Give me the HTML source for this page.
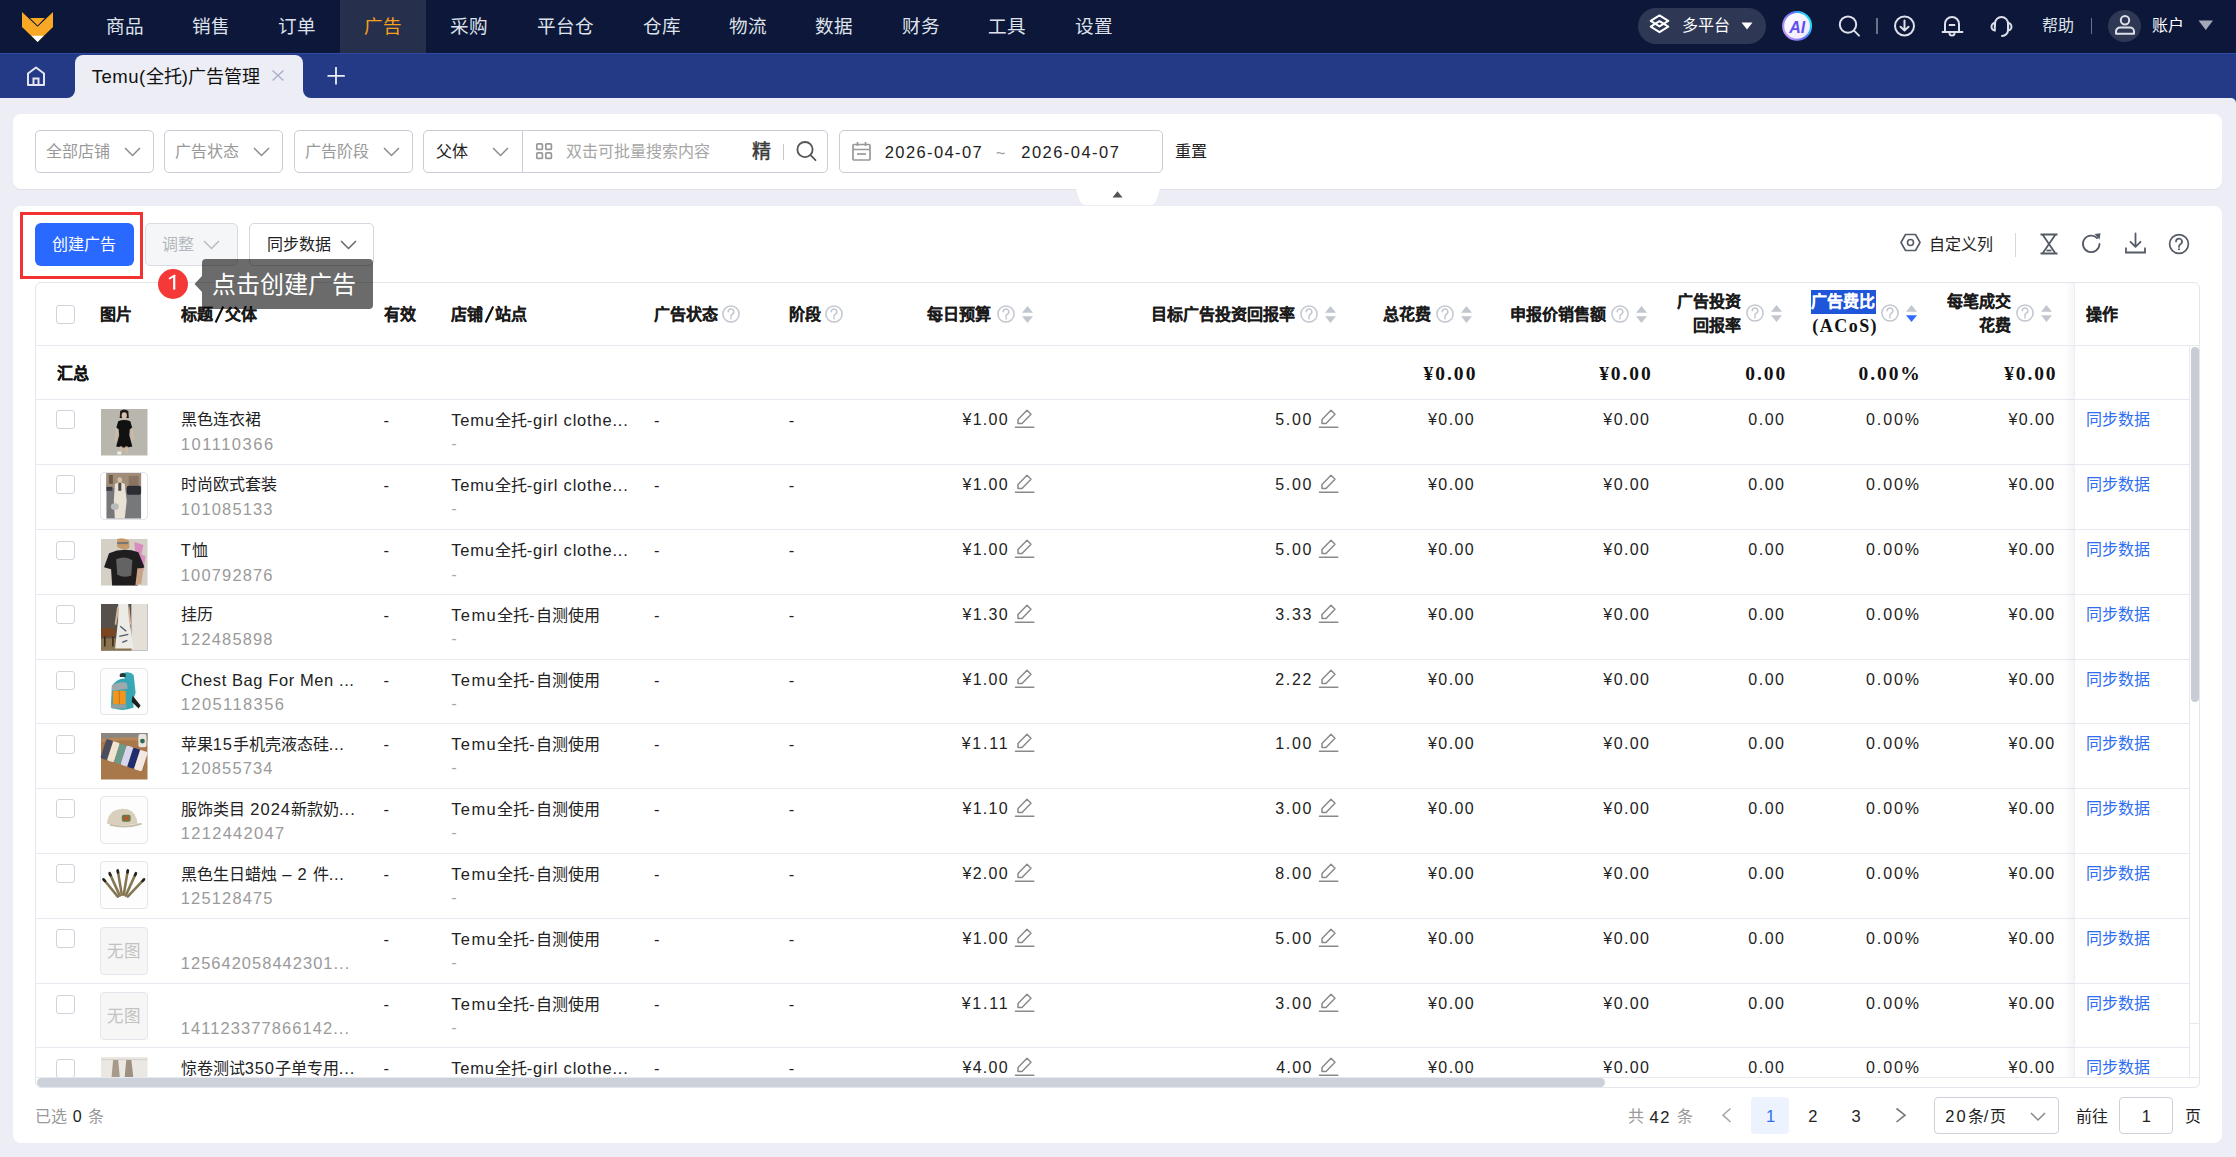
<!DOCTYPE html>
<html lang="zh-CN"><head><meta charset="utf-8"><title>Temu(全托)广告管理</title>
<style>
html,body{margin:0;padding:0;width:2236px;height:1157px;overflow:hidden;background:#ecedf5;font-family:"Liberation Sans",sans-serif}
.a{position:absolute;white-space:nowrap;box-sizing:border-box}
.b{-webkit-text-stroke:0.25px currentColor}
svg.a{overflow:visible}
</style></head><body>
<div class="a" style="left:0.0px;top:0.0px;width:2236.0px;height:53.0px;background:#0c1739"></div>
<div class="a" style="left:340.0px;top:0.0px;width:86.0px;height:53.0px;background:#262f4c"></div>
<svg class="a" style="left:20.0px;top:10.0px" width="36" height="34" viewBox="0 0 36 34" fill="none"><polygon points="2,2 17.6,16.7 33,2 33,17 17.6,32 2,17" fill="#f9a825"/><polygon points="10,8 24.8,8 17.6,15.4" fill="#f9a825"/><polygon points="11.5,25.8 23.7,25.8 17.6,32" fill="#ffffff"/></svg>
<div class="a" style="left:105.5px;top:15.1px;height:24px;line-height:24px;color:#dfe2ea;font-size:18.6px;font-weight:normal;">商品</div>
<div class="a" style="left:191.8px;top:15.1px;height:24px;line-height:24px;color:#dfe2ea;font-size:18.6px;font-weight:normal;">销售</div>
<div class="a" style="left:277.8px;top:15.1px;height:24px;line-height:24px;color:#dfe2ea;font-size:18.6px;font-weight:normal;">订单</div>
<div class="a" style="left:363.8px;top:15.1px;height:24px;line-height:24px;color:#f7a21b;font-size:18.6px;font-weight:normal;">广告</div>
<div class="a" style="left:449.8px;top:15.1px;height:24px;line-height:24px;color:#dfe2ea;font-size:18.6px;font-weight:normal;">采购</div>
<div class="a" style="left:536.8px;top:15.1px;height:24px;line-height:24px;color:#dfe2ea;font-size:18.6px;font-weight:normal;">平台仓</div>
<div class="a" style="left:642.6px;top:15.1px;height:24px;line-height:24px;color:#dfe2ea;font-size:18.6px;font-weight:normal;">仓库</div>
<div class="a" style="left:728.8px;top:15.1px;height:24px;line-height:24px;color:#dfe2ea;font-size:18.6px;font-weight:normal;">物流</div>
<div class="a" style="left:815.4px;top:15.1px;height:24px;line-height:24px;color:#dfe2ea;font-size:18.6px;font-weight:normal;">数据</div>
<div class="a" style="left:901.5px;top:15.1px;height:24px;line-height:24px;color:#dfe2ea;font-size:18.6px;font-weight:normal;">财务</div>
<div class="a" style="left:987.8px;top:15.1px;height:24px;line-height:24px;color:#dfe2ea;font-size:18.6px;font-weight:normal;">工具</div>
<div class="a" style="left:1074.5px;top:15.1px;height:24px;line-height:24px;color:#dfe2ea;font-size:18.6px;font-weight:normal;">设置</div>
<div class="a" style="left:1638.0px;top:8.0px;width:128.0px;height:36.0px;background:#2e3754;border-radius:18px"></div>
<svg class="a" style="left:1648.0px;top:13.0px" width="24" height="23" viewBox="0 0 24 23" fill="none"><path d="M11.5 2.4 L20.3 7.9 L11.5 13.4 L2.7 7.9 Z" stroke="#fff" stroke-width="2" stroke-linejoin="round"/><path d="M11.5 8.2 L20.3 13.7 L11.5 19.2 L2.7 13.7 Z" stroke="#fff" stroke-width="2" stroke-linejoin="round"/></svg>
<div class="a" style="left:1681.8px;top:14.3px;height:24px;line-height:24px;color:#fff;font-size:16px;font-weight:normal;">多平台</div>
<svg class="a" style="left:1741.0px;top:22.0px" width="12" height="8" viewBox="0 0 12 8" fill="none"><polygon points="0.5,0.5 11.5,0.5 6,7.5" fill="#fff"/></svg>
<svg class="a" style="left:1781.0px;top:10.0px" width="32" height="32" viewBox="0 0 32 32" fill="none"><defs><linearGradient id="aig" x1="0.1" y1="0.9" x2="1" y2="0.45"><stop offset="0" stop-color="#c79af7"/><stop offset="0.55" stop-color="#5f6af7"/><stop offset="1" stop-color="#22d8f6"/></linearGradient><linearGradient id="aif" x1="0" y1="0" x2="1" y2="1"><stop offset="0" stop-color="#ffffff"/><stop offset="1" stop-color="#efe6ff"/></linearGradient></defs><circle cx="16.1" cy="15.9" r="13.9" fill="url(#aif)" stroke="url(#aig)" stroke-width="2.1"/><text x="16.2" y="22.9" text-anchor="middle" font-family="Liberation Sans" font-weight="bold" font-style="italic" font-size="16" fill="#6150f0">AI</text></svg>
<svg class="a" style="left:1837.0px;top:14.0px" width="26" height="24" viewBox="0 0 26 24" fill="none"><circle cx="11" cy="10.6" r="8.2" stroke="#dde0e8" stroke-width="2"/><line x1="17" y1="16.6" x2="22" y2="21.6" stroke="#dde0e8" stroke-width="2" stroke-linecap="round"/></svg>
<div class="a" style="left:1876.2px;top:18.0px;width:1.6px;height:16.0px;background:#6b7287"></div>
<svg class="a" style="left:1893.0px;top:15.0px" width="24" height="24" viewBox="0 0 24 24" fill="none"><circle cx="11.5" cy="11" r="9.5" stroke="#dde0e8" stroke-width="2"/><path d="M11.5 5.5 V15.5 M7.5 11.8 L11.5 15.6 L15.5 11.8" stroke="#dde0e8" stroke-width="2" stroke-linecap="round" stroke-linejoin="round"/></svg>
<svg class="a" style="left:1940.0px;top:14.0px" width="26" height="24" viewBox="0 0 26 24" fill="none"><path d="M5 17.5 V10 a7 7 0 0 1 14 0 V17.5" stroke="#dde0e8" stroke-width="2"/><line x1="1.8" y1="18" x2="23.2" y2="18" stroke="#dde0e8" stroke-width="2"/><line x1="8.8" y1="11" x2="15.2" y2="11" stroke="#dde0e8" stroke-width="2"/><path d="M9.5 19 a2.5 2.5 0 0 0 5 0" stroke="#dde0e8" stroke-width="2"/></svg>
<svg class="a" style="left:1989.0px;top:14.0px" width="26" height="25" viewBox="0 0 26 25" fill="none"><path d="M6 12 V9.5 a6.5 6.5 0 0 1 13 0 V16 a6 6 0 0 1 -6 6" stroke="#dde0e8" stroke-width="2" stroke-linecap="round"/><path d="M5.8 9 a3.2 3.6 0 0 0 0 7.4 Z" stroke="#dde0e8" stroke-width="2"/><path d="M19.2 9 a3.2 3.6 0 0 1 0 7.4 Z" stroke="#dde0e8" stroke-width="2"/></svg>
<div class="a" style="left:2041.8px;top:14.3px;height:24px;line-height:24px;color:#dfe2ea;font-size:16px;font-weight:normal;">帮助</div>
<div class="a" style="left:2090.6px;top:18.0px;width:1.4px;height:16.0px;background:#6b7287"></div>
<div class="a" style="left:2108.0px;top:10.0px;width:33.0px;height:32.0px;background:#2e3754;border-radius:50%"></div>
<svg class="a" style="left:2113.0px;top:14.0px" width="24" height="24" viewBox="0 0 24 24" fill="none"><circle cx="12" cy="6.3" r="4.2" stroke="#dde0e8" stroke-width="2"/><path d="M3 19.8 V17.5 a4 4 0 0 1 4-4 H17 a4 4 0 0 1 4 4 V19.8 Z" stroke="#dde0e8" stroke-width="2" stroke-linejoin="round"/></svg>
<div class="a" style="left:2152.3px;top:14.3px;height:24px;line-height:24px;color:#fff;font-size:16px;font-weight:normal;">账户</div>
<svg class="a" style="left:2198.0px;top:20.0px" width="16" height="11" viewBox="0 0 16 11" fill="none"><polygon points="0.5,0.5 15,0.5 7.8,10" fill="#a3a8b6"/></svg>
<div class="a" style="left:0.0px;top:53.0px;width:2236.0px;height:45.0px;background:#243a86;border-top:1px solid #2f4aa2;box-sizing:border-box"></div>
<div class="a" style="left:0.0px;top:98.0px;width:2236.0px;height:1059.0px;background:#ecedf5"></div>
<div class="a" style="left:2226.0px;top:97.0px;width:10.0px;height:9.0px;background:#243a86"></div>
<div class="a" style="left:2216.0px;top:98.0px;width:20.0px;height:20.0px;background:#ecedf5;border-top-right-radius:5px"></div>
<div class="a" style="left:67.0px;top:90.0px;width:16.0px;height:8.0px;background:#ecedf5"></div>
<div class="a" style="left:59.0px;top:82.0px;width:16.0px;height:16.0px;background:#243a86;border-bottom-right-radius:8px"></div>
<div class="a" style="left:295.0px;top:90.0px;width:16.0px;height:8.0px;background:#ecedf5"></div>
<div class="a" style="left:303.0px;top:82.0px;width:16.0px;height:16.0px;background:#243a86;border-bottom-left-radius:8px"></div>
<div class="a" style="left:75.0px;top:55.0px;width:228.0px;height:43.0px;background:#ecedf5;border-radius:8px 8px 0 0"></div>
<svg class="a" style="left:25.0px;top:64.0px" width="22" height="24" viewBox="0 0 22 24" fill="none"><path d="M3 9.5 L11 3.5 L19 9.5 V21 H3 Z" stroke="#e3e6f0" stroke-width="2" stroke-linejoin="round"/><path d="M8.5 21 V14.5 H13.5 V21" stroke="#e3e6f0" stroke-width="2"/></svg>
<div class="a" style="left:91.8px;top:64.8px;height:24px;line-height:24px;color:#111;font-size:18px;font-weight:normal;"><span style="letter-spacing:0.50px;font-size:18.54px;">Temu(</span>全托<span style="letter-spacing:0.50px;font-size:18.54px;">)</span>广告管理</div>
<svg class="a" style="left:271.0px;top:69.0px" width="14" height="13" viewBox="0 0 14 13" fill="none"><path d="M1.5 1.5 L12.5 11.5 M12.5 1.5 L1.5 11.5" stroke="#a9b0c8" stroke-width="1.4"/></svg>
<svg class="a" style="left:326.0px;top:66.0px" width="20" height="20" viewBox="0 0 20 20" fill="none"><path d="M10 1 V18.5 M1.5 9.8 H18.8" stroke="#eef0f6" stroke-width="1.8"/></svg>
<div class="a" style="left:13.0px;top:113.5px;width:2209.0px;height:75.5px;background:#fff;border-radius:8px;box-shadow:0 1px 0 #e0e2ea"></div>
<div class="a" style="left:35.0px;top:129.8px;width:118.7px;height:42.9px;border:1px solid #c9cdd6;border-radius:5px;box-sizing:border-box;background:#fff"></div>
<div class="a" style="left:46.3px;top:139.8px;height:24px;line-height:24px;color:#999;font-size:16px;font-weight:normal;">全部店铺</div>
<svg class="a" style="left:123.7px;top:146.6px" width="17" height="9.5" viewBox="0 0 17 9.5" fill="none"><polyline points="1,1 8.5,8.5 16,1" stroke="#8c8c8c" stroke-width="1.5" fill="none"/></svg>
<div class="a" style="left:164.1px;top:129.8px;width:118.7px;height:42.9px;border:1px solid #c9cdd6;border-radius:5px;box-sizing:border-box;background:#fff"></div>
<div class="a" style="left:175.4px;top:139.8px;height:24px;line-height:24px;color:#999;font-size:16px;font-weight:normal;">广告状态</div>
<svg class="a" style="left:252.8px;top:146.6px" width="17" height="9.5" viewBox="0 0 17 9.5" fill="none"><polyline points="1,1 8.5,8.5 16,1" stroke="#8c8c8c" stroke-width="1.5" fill="none"/></svg>
<div class="a" style="left:294.1px;top:129.8px;width:118.7px;height:42.9px;border:1px solid #c9cdd6;border-radius:5px;box-sizing:border-box;background:#fff"></div>
<div class="a" style="left:305.4px;top:139.8px;height:24px;line-height:24px;color:#999;font-size:16px;font-weight:normal;">广告阶段</div>
<svg class="a" style="left:382.8px;top:146.6px" width="17" height="9.5" viewBox="0 0 17 9.5" fill="none"><polyline points="1,1 8.5,8.5 16,1" stroke="#8c8c8c" stroke-width="1.5" fill="none"/></svg>
<div class="a" style="left:423.1px;top:129.8px;width:404.9px;height:42.9px;border:1px solid #c9cdd6;border-radius:5px;box-sizing:border-box;background:#fff"></div>
<div class="a" style="left:436.3px;top:139.8px;height:24px;line-height:24px;color:#222;font-size:16px;font-weight:normal;">父体</div>
<svg class="a" style="left:492.2px;top:146.6px" width="17" height="9.5" viewBox="0 0 17 9.5" fill="none"><polyline points="1,1 8.5,8.5 16,1" stroke="#8c8c8c" stroke-width="1.5" fill="none"/></svg>
<div class="a" style="left:522.3px;top:130.5px;width:1.2px;height:41.5px;background:#c9cdd6"></div>
<svg class="a" style="left:535.0px;top:141.5px" width="19" height="19" viewBox="0 0 19 19" fill="none"><rect x="1.8" y="1.8" width="5.6" height="5.6" rx="1" stroke="#999" stroke-width="1.7"/><rect x="10.8" y="1.8" width="5.6" height="5.6" rx="1" stroke="#999" stroke-width="1.7"/><rect x="1.8" y="10.8" width="5.6" height="5.6" rx="1" stroke="#999" stroke-width="1.7"/><rect x="10.8" y="10.8" width="5.6" height="5.6" rx="1" stroke="#999" stroke-width="1.7"/></svg>
<div class="a" style="left:566.3px;top:139.8px;height:24px;line-height:24px;color:#a6a6a6;font-size:16px;font-weight:normal;">双击可批量搜索内容</div>
<div class="a" style="left:751.8px;top:139.8px;height:24px;line-height:24px;color:#3a3a3a;font-size:19px;font-weight:normal;-webkit-text-stroke:0.45px #3a3a3a;">精</div>
<div class="a" style="left:783.0px;top:144.0px;width:1.3px;height:15.5px;background:#c9c9c9"></div>
<svg class="a" style="left:795.0px;top:139.5px" width="23" height="23" viewBox="0 0 23 23" fill="none"><circle cx="10" cy="9.6" r="7.6" stroke="#555" stroke-width="1.8"/><line x1="15.5" y1="15.2" x2="20.5" y2="20.2" stroke="#555" stroke-width="1.8" stroke-linecap="round"/></svg>
<div class="a" style="left:839.2px;top:129.8px;width:323.6px;height:42.9px;border:1px solid #c9cdd6;border-radius:5px;box-sizing:border-box;background:#fff"></div>
<svg class="a" style="left:850.5px;top:140.5px" width="21" height="21" viewBox="0 0 21 21" fill="none"><rect x="2" y="3.5" width="17" height="15.5" rx="1" stroke="#999" stroke-width="1.7"/><line x1="6.5" y1="1" x2="6.5" y2="5" stroke="#999" stroke-width="1.7"/><line x1="14.5" y1="1" x2="14.5" y2="5" stroke="#999" stroke-width="1.7"/><line x1="2" y1="8.5" x2="19" y2="8.5" stroke="#999" stroke-width="1.5"/><line x1="6" y1="13" x2="15" y2="13" stroke="#999" stroke-width="1.7"/></svg>
<div class="a" style="left:884.8px;top:139.8px;height:24px;line-height:24px;color:#222;font-size:16px;font-weight:normal;"><span style="letter-spacing:1.41px;font-size:16.48px;">2026-04-07</span></div>
<div class="a" style="left:995.8px;top:140.8px;height:24px;line-height:24px;color:#999;font-size:16px;font-weight:normal;"><span style="letter-spacing:0px;font-size:16.48px;">~</span></div>
<div class="a" style="left:1021.3px;top:139.8px;height:24px;line-height:24px;color:#222;font-size:16px;font-weight:normal;"><span style="letter-spacing:1.48px;font-size:16.48px;">2026-04-07</span></div>
<div class="a" style="left:1175.3px;top:139.8px;height:24px;line-height:24px;color:#222;font-size:16px;font-weight:normal;">重置</div>
<svg class="a" style="left:1076.0px;top:188.0px" width="84" height="18" viewBox="0 0 84 18" fill="none"><path d="M0 1 H84 L80 13 Q78.5 17 74 17 H10 Q5.5 17 4 13 Z" fill="#fff"/><polygon points="36.5,9.5 46.5,9.5 41.5,3.2" fill="#555"/></svg>
<div class="a" style="left:13.0px;top:206.0px;width:2209.0px;height:937.0px;background:#fff;border-radius:8px"></div>
<div class="a" style="left:20.0px;top:212.0px;width:123.0px;height:67.0px;border:3px solid #f23131;box-sizing:border-box"></div>
<div class="a" style="left:35.0px;top:223.0px;width:99.0px;height:43.0px;background:#2a69ff;border-radius:6px"></div>
<div class="a" style="left:52.3px;top:232.6px;height:24px;line-height:24px;color:#fff;font-size:16px;font-weight:normal;">创建广告</div>
<div class="a" style="left:145.4px;top:223.0px;width:92.2px;height:42.5px;background:#f5f6f8;border:1px solid #d9dce2;border-radius:5px;box-sizing:border-box"></div>
<div class="a" style="left:162.3px;top:232.6px;height:24px;line-height:24px;color:#b3b6bc;font-size:16px;font-weight:normal;">调整</div>
<svg class="a" style="left:202.5px;top:239.5px" width="17" height="9.5" viewBox="0 0 17 9.5" fill="none"><polyline points="1,1 8.5,8.5 16,1" stroke="#b9bcc2" stroke-width="1.5" fill="none"/></svg>
<div class="a" style="left:249.3px;top:223.0px;width:125.1px;height:42.5px;background:#fff;border:1px solid #d3d7de;border-radius:5px;box-sizing:border-box"></div>
<div class="a" style="left:267.3px;top:232.6px;height:24px;line-height:24px;color:#222;font-size:16px;font-weight:normal;">同步数据</div>
<svg class="a" style="left:339.5px;top:239.5px" width="17" height="9.5" viewBox="0 0 17 9.5" fill="none"><polyline points="1,1 8.5,8.5 16,1" stroke="#666" stroke-width="1.5" fill="none"/></svg>
<svg class="a" style="left:1900.0px;top:233.0px" width="21" height="19" viewBox="0 0 21 19" fill="none"><path d="M5.5 1.5 H15.5 L20 9.5 L15.5 17.5 H5.5 L1 9.5 Z" stroke="#555b66" stroke-width="1.6" stroke-linejoin="round"/><circle cx="10.5" cy="9.5" r="3" stroke="#555b66" stroke-width="1.6"/></svg>
<div class="a" style="left:1928.8px;top:232.6px;height:24px;line-height:24px;color:#222;font-size:16px;font-weight:normal;">自定义列</div>
<div class="a" style="left:2015.0px;top:233.3px;width:1.3px;height:23.5px;background:#d5d8de"></div>
<svg class="a" style="left:2039.0px;top:233.0px" width="20" height="22" viewBox="0 0 20 22" fill="none"><path d="M1.5 1.5 H18.5 M1.5 20.5 H18.5 M3.5 1.5 L10 11 L3.5 20.5 M16.5 1.5 L10 11 L16.5 20.5" stroke="#555b66" stroke-width="1.8"/><line x1="7.5" y1="17.5" x2="12.5" y2="17.5" stroke="#555b66" stroke-width="1.8"/></svg>
<svg class="a" style="left:2081.0px;top:232.0px" width="22" height="23" viewBox="0 0 22 23" fill="none"><path d="M18.5 12 a8.3 8.3 0 1 1 -2.4 -6.0" stroke="#555b66" stroke-width="1.8" stroke-linecap="round"/><polygon points="13.5,2 19.5,1.2 18.6,7.4" fill="#555b66"/></svg>
<svg class="a" style="left:2124.0px;top:232.0px" width="23" height="23" viewBox="0 0 23 23" fill="none"><path d="M11.5 1.5 V14.5 M6.5 9.8 L11.5 14.8 L16.5 9.8" stroke="#555b66" stroke-width="1.8" stroke-linecap="round" stroke-linejoin="round"/><path d="M2 15.5 V20.5 H21 V15.5" stroke="#555b66" stroke-width="1.8"/></svg>
<svg class="a" style="left:2167.5px;top:233.0px" width="22" height="22" viewBox="0 0 22 22" fill="none"><circle cx="11" cy="11" r="9.4" stroke="#555b66" stroke-width="1.7"/><path d="M8 8.6 a3 3 0 1 1 4.4 2.6 c-0.9 0.5-1.4 1-1.4 2.2 v0.5" stroke="#555b66" stroke-width="1.7" stroke-linecap="round"/><circle cx="11" cy="16.3" r="1.05" fill="#555b66"/></svg>
<div class="a" style="left:35.1px;top:281.8px;width:2164.9px;height:806.0px;border:1px solid #e3e6ed;border-radius:6px;box-sizing:border-box"></div>
<div class="a" style="left:35.1px;top:345.4px;width:2164.9px;height:1.0px;background:#e6e9ef"></div>
<div class="a" style="left:35.1px;top:399.2px;width:2154.9px;height:1.0px;background:#e6e9ef"></div>
<div class="a" style="left:35.1px;top:463.7px;width:2154.9px;height:1.0px;background:#e6e9ef"></div>
<div class="a" style="left:35.1px;top:529.0px;width:2154.9px;height:1.0px;background:#e6e9ef"></div>
<div class="a" style="left:35.1px;top:593.8px;width:2154.9px;height:1.0px;background:#e6e9ef"></div>
<div class="a" style="left:35.1px;top:658.9px;width:2154.9px;height:1.0px;background:#e6e9ef"></div>
<div class="a" style="left:35.1px;top:722.9px;width:2154.9px;height:1.0px;background:#e6e9ef"></div>
<div class="a" style="left:35.1px;top:787.7px;width:2154.9px;height:1.0px;background:#e6e9ef"></div>
<div class="a" style="left:35.1px;top:852.8px;width:2154.9px;height:1.0px;background:#e6e9ef"></div>
<div class="a" style="left:35.1px;top:917.8px;width:2154.9px;height:1.0px;background:#e6e9ef"></div>
<div class="a" style="left:35.1px;top:982.9px;width:2154.9px;height:1.0px;background:#e6e9ef"></div>
<div class="a" style="left:35.1px;top:1046.9px;width:2154.9px;height:1.0px;background:#e6e9ef"></div>
<div class="a" style="left:56.3px;top:305.0px;width:19.0px;height:19.0px;border:1px solid #cfd3dc;border-radius:3px;box-sizing:border-box;background:#fff"></div>
<div class="a" style="left:100.2px;top:302.6px;height:24px;line-height:24px;color:#1a1a1a;font-size:16px;font-weight:bold;-webkit-text-stroke:0.12px currentColor;">图片</div>
<div class="a" style="left:383.5px;top:302.6px;height:24px;line-height:24px;color:#1a1a1a;font-size:16px;font-weight:bold;-webkit-text-stroke:0.12px currentColor;">有效</div>
<div class="a" style="left:180.8px;top:302.6px;height:24px;line-height:24px;color:#1a1a1a;font-size:16px;font-weight:bold;-webkit-text-stroke:0.12px currentColor;">标题</div>
<div class="a" style="left:224.6px;top:302.6px;height:24px;line-height:24px;color:#1a1a1a;font-size:16px;font-weight:bold;-webkit-text-stroke:0.12px currentColor;">父体</div>
<svg class="a" style="left:213.0px;top:305.0px" width="12" height="19" viewBox="0 0 12 19" fill="none"><line x1="10.2" y1="1.5" x2="2.6" y2="17.5" stroke="#111" stroke-width="2.1" stroke-linecap="butt"/></svg>
<div class="a" style="left:494.6px;top:302.6px;height:24px;line-height:24px;color:#1a1a1a;font-size:16px;font-weight:bold;-webkit-text-stroke:0.12px currentColor;">站点</div>
<div class="a" style="left:450.5px;top:302.6px;height:24px;line-height:24px;color:#1a1a1a;font-size:16px;font-weight:bold;-webkit-text-stroke:0.12px currentColor;">店铺</div>
<svg class="a" style="left:483.0px;top:305.0px" width="12" height="19" viewBox="0 0 12 19" fill="none"><line x1="10.2" y1="1.5" x2="2.6" y2="17.5" stroke="#111" stroke-width="2.1" stroke-linecap="butt"/></svg>
<div class="a" style="left:2085.8px;top:302.6px;height:24px;line-height:24px;color:#1a1a1a;font-size:16px;font-weight:bold;-webkit-text-stroke:0.12px currentColor;">操作</div>
<div class="a" style="left:653.5px;top:302.6px;height:24px;line-height:24px;color:#1a1a1a;font-size:16px;font-weight:bold;-webkit-text-stroke:0.12px currentColor;">广告状态</div>
<svg class="a" style="left:722.3px;top:305.0px" width="18" height="18" viewBox="0 0 18 18" fill="none"><circle cx="9.0" cy="9.0" r="8.1" stroke="#c2c6ce" stroke-width="1.5"/><path d="M6.2 6.8 a2.8 2.8 0 1 1 4.2 2.4 c-0.9 0.5-1.4 1-1.4 2.1 v0.6" stroke="#c2c6ce" stroke-width="1.5" stroke-linecap="round"/><circle cx="9.0" cy="13.6" r="0.95" fill="#c2c6ce"/></svg>
<div class="a" style="left:788.8px;top:302.6px;height:24px;line-height:24px;color:#1a1a1a;font-size:16px;font-weight:bold;-webkit-text-stroke:0.12px currentColor;">阶段</div>
<svg class="a" style="left:825.0px;top:305.0px" width="18" height="18" viewBox="0 0 18 18" fill="none"><circle cx="9.0" cy="9.0" r="8.1" stroke="#c2c6ce" stroke-width="1.5"/><path d="M6.2 6.8 a2.8 2.8 0 1 1 4.2 2.4 c-0.9 0.5-1.4 1-1.4 2.1 v0.6" stroke="#c2c6ce" stroke-width="1.5" stroke-linecap="round"/><circle cx="9.0" cy="13.6" r="0.95" fill="#c2c6ce"/></svg>
<div class="a" style="left:926.8px;top:302.6px;height:24px;line-height:24px;color:#1a1a1a;font-size:16px;font-weight:bold;-webkit-text-stroke:0.12px currentColor;">每日预算</div>
<svg class="a" style="left:996.6px;top:305.0px" width="18" height="18" viewBox="0 0 18 18" fill="none"><circle cx="9.0" cy="9.0" r="8.1" stroke="#c2c6ce" stroke-width="1.5"/><path d="M6.2 6.8 a2.8 2.8 0 1 1 4.2 2.4 c-0.9 0.5-1.4 1-1.4 2.1 v0.6" stroke="#c2c6ce" stroke-width="1.5" stroke-linecap="round"/><circle cx="9.0" cy="13.6" r="0.95" fill="#c2c6ce"/></svg>
<svg class="a" style="left:1021.5px;top:305.5px" width="11" height="17" viewBox="0 0 11 17" fill="none"><polygon points="0,6.8 5.5,0 11,6.8" fill="#c2c6ce"/><polygon points="0,10.2 11,10.2 5.5,17" fill="#c2c6ce"/></svg>
<div class="a" style="left:1151.1px;top:302.6px;height:24px;line-height:24px;color:#1a1a1a;font-size:16px;font-weight:bold;-webkit-text-stroke:0.12px currentColor;">目标广告投资回报率</div>
<svg class="a" style="left:1300.4px;top:305.0px" width="18" height="18" viewBox="0 0 18 18" fill="none"><circle cx="9.0" cy="9.0" r="8.1" stroke="#c2c6ce" stroke-width="1.5"/><path d="M6.2 6.8 a2.8 2.8 0 1 1 4.2 2.4 c-0.9 0.5-1.4 1-1.4 2.1 v0.6" stroke="#c2c6ce" stroke-width="1.5" stroke-linecap="round"/><circle cx="9.0" cy="13.6" r="0.95" fill="#c2c6ce"/></svg>
<svg class="a" style="left:1325.3px;top:305.5px" width="11" height="17" viewBox="0 0 11 17" fill="none"><polygon points="0,6.8 5.5,0 11,6.8" fill="#c2c6ce"/><polygon points="0,10.2 11,10.2 5.5,17" fill="#c2c6ce"/></svg>
<div class="a" style="left:1382.8px;top:302.6px;height:24px;line-height:24px;color:#1a1a1a;font-size:16px;font-weight:bold;-webkit-text-stroke:0.12px currentColor;">总花费</div>
<svg class="a" style="left:1435.6px;top:305.0px" width="18" height="18" viewBox="0 0 18 18" fill="none"><circle cx="9.0" cy="9.0" r="8.1" stroke="#c2c6ce" stroke-width="1.5"/><path d="M6.2 6.8 a2.8 2.8 0 1 1 4.2 2.4 c-0.9 0.5-1.4 1-1.4 2.1 v0.6" stroke="#c2c6ce" stroke-width="1.5" stroke-linecap="round"/><circle cx="9.0" cy="13.6" r="0.95" fill="#c2c6ce"/></svg>
<svg class="a" style="left:1460.5px;top:305.5px" width="11" height="17" viewBox="0 0 11 17" fill="none"><polygon points="0,6.8 5.5,0 11,6.8" fill="#c2c6ce"/><polygon points="0,10.2 11,10.2 5.5,17" fill="#c2c6ce"/></svg>
<div class="a" style="left:1509.8px;top:302.6px;height:24px;line-height:24px;color:#1a1a1a;font-size:16px;font-weight:bold;-webkit-text-stroke:0.12px currentColor;">申报价销售额</div>
<svg class="a" style="left:1611.4px;top:305.0px" width="18" height="18" viewBox="0 0 18 18" fill="none"><circle cx="9.0" cy="9.0" r="8.1" stroke="#c2c6ce" stroke-width="1.5"/><path d="M6.2 6.8 a2.8 2.8 0 1 1 4.2 2.4 c-0.9 0.5-1.4 1-1.4 2.1 v0.6" stroke="#c2c6ce" stroke-width="1.5" stroke-linecap="round"/><circle cx="9.0" cy="13.6" r="0.95" fill="#c2c6ce"/></svg>
<svg class="a" style="left:1636.0px;top:305.5px" width="11" height="17" viewBox="0 0 11 17" fill="none"><polygon points="0,6.8 5.5,0 11,6.8" fill="#c2c6ce"/><polygon points="0,10.2 11,10.2 5.5,17" fill="#c2c6ce"/></svg>
<div class="a" style="right:494.8px;top:290.0px;height:24px;line-height:24px;color:#1a1a1a;text-align:right;font-size:16px;font-weight:bold;-webkit-text-stroke:0.12px currentColor;"><span style="letter-spacing:0px;margin-right:-0px">广告投资</span></div>
<div class="a" style="right:494.8px;top:313.6px;height:24px;line-height:24px;color:#1a1a1a;text-align:right;font-size:16px;font-weight:bold;-webkit-text-stroke:0.12px currentColor;"><span style="letter-spacing:0px;margin-right:-0px">回报率</span></div>
<svg class="a" style="left:1746.0px;top:304.0px" width="18" height="18" viewBox="0 0 18 18" fill="none"><circle cx="9.0" cy="9.0" r="8.1" stroke="#c2c6ce" stroke-width="1.5"/><path d="M6.2 6.8 a2.8 2.8 0 1 1 4.2 2.4 c-0.9 0.5-1.4 1-1.4 2.1 v0.6" stroke="#c2c6ce" stroke-width="1.5" stroke-linecap="round"/><circle cx="9.0" cy="13.6" r="0.95" fill="#c2c6ce"/></svg>
<svg class="a" style="left:1771.0px;top:305.0px" width="11" height="17" viewBox="0 0 11 17" fill="none"><polygon points="0,6.8 5.5,0 11,6.8" fill="#c2c6ce"/><polygon points="0,10.2 11,10.2 5.5,17" fill="#c2c6ce"/></svg>
<div class="a" style="left:1811.0px;top:290.0px;width:65.0px;height:23.8px;background:#1f55d8"></div>
<div class="a" style="left:1811.3px;top:290.0px;height:24px;line-height:24px;color:#fff;font-size:16px;font-weight:bold;-webkit-text-stroke:0.12px currentColor;">广告费比</div>
<div class="a" style="left:1812.3px;top:314.1px;height:24px;line-height:24px;color:#111;font-size:18px;font-weight:bold;font-family:'Liberation Serif',serif;"><span style="letter-spacing:1.46px;">(ACoS)</span></div>
<svg class="a" style="left:1881.0px;top:304.0px" width="18" height="18" viewBox="0 0 18 18" fill="none"><circle cx="9.0" cy="9.0" r="8.1" stroke="#c2c6ce" stroke-width="1.5"/><path d="M6.2 6.8 a2.8 2.8 0 1 1 4.2 2.4 c-0.9 0.5-1.4 1-1.4 2.1 v0.6" stroke="#c2c6ce" stroke-width="1.5" stroke-linecap="round"/><circle cx="9.0" cy="13.6" r="0.95" fill="#c2c6ce"/></svg>
<svg class="a" style="left:1906.0px;top:305.0px" width="11" height="17" viewBox="0 0 11 17" fill="none"><polygon points="0,6.8 5.5,0 11,6.8" fill="#c2c6ce"/><polygon points="0,10.2 11,10.2 5.5,17" fill="#2f6bff"/></svg>
<div class="a" style="right:225.0px;top:290.0px;height:24px;line-height:24px;color:#1a1a1a;text-align:right;font-size:16px;font-weight:bold;-webkit-text-stroke:0.12px currentColor;"><span style="letter-spacing:0px;margin-right:-0px">每笔成交</span></div>
<div class="a" style="right:225.0px;top:313.6px;height:24px;line-height:24px;color:#1a1a1a;text-align:right;font-size:16px;font-weight:bold;-webkit-text-stroke:0.12px currentColor;"><span style="letter-spacing:0px;margin-right:-0px">花费</span></div>
<svg class="a" style="left:2015.5px;top:304.0px" width="18" height="18" viewBox="0 0 18 18" fill="none"><circle cx="9.0" cy="9.0" r="8.1" stroke="#c2c6ce" stroke-width="1.5"/><path d="M6.2 6.8 a2.8 2.8 0 1 1 4.2 2.4 c-0.9 0.5-1.4 1-1.4 2.1 v0.6" stroke="#c2c6ce" stroke-width="1.5" stroke-linecap="round"/><circle cx="9.0" cy="13.6" r="0.95" fill="#c2c6ce"/></svg>
<svg class="a" style="left:2040.8px;top:305.0px" width="11" height="17" viewBox="0 0 11 17" fill="none"><polygon points="0,6.8 5.5,0 11,6.8" fill="#c2c6ce"/><polygon points="0,10.2 11,10.2 5.5,17" fill="#c2c6ce"/></svg>
<div class="a" style="left:57.1px;top:361.5px;height:24px;line-height:24px;color:#111;font-size:16px;font-weight:bold;-webkit-text-stroke:0.12px currentColor;">汇总</div>
<div class="a" style="right:760.6px;top:361.5px;height:24px;line-height:24px;color:#111;text-align:right;font-size:19.5px;font-weight:bold;font-family:'Liberation Serif',serif;"><span style="letter-spacing:2.03px;margin-right:-2.03px">¥0.00</span></div>
<div class="a" style="right:585.3px;top:361.5px;height:24px;line-height:24px;color:#111;text-align:right;font-size:19.5px;font-weight:bold;font-family:'Liberation Serif',serif;"><span style="letter-spacing:1.90px;margin-right:-1.90px">¥0.00</span></div>
<div class="a" style="right:450.8px;top:361.5px;height:24px;line-height:24px;color:#111;text-align:right;font-size:19.5px;font-weight:bold;font-family:'Liberation Serif',serif;"><span style="letter-spacing:1.90px;margin-right:-1.90px">0.00</span></div>
<div class="a" style="right:316.2px;top:361.5px;height:24px;line-height:24px;color:#111;text-align:right;font-size:19.5px;font-weight:bold;font-family:'Liberation Serif',serif;"><span style="letter-spacing:1.90px;margin-right:-1.90px">0.00%</span></div>
<div class="a" style="right:180.5px;top:361.5px;height:24px;line-height:24px;color:#111;text-align:right;font-size:19.5px;font-weight:bold;font-family:'Liberation Serif',serif;"><span style="letter-spacing:1.85px;margin-right:-1.85px">¥0.00</span></div>
<div class="a" style="left:0;top:0;width:2236px;height:1077.7px;overflow:hidden"><div class="a" style="left:56.3px;top:410.4px;width:19.0px;height:19.0px;border:1px solid #cfd3dc;border-radius:3px;box-sizing:border-box;background:#fff"></div><svg class="a" style="left:100.6px;top:409.0px;border-radius:3px" width="46.5" height="46.5" viewBox="0 0 46 46" preserveAspectRatio="none"><rect width="46" height="46" fill="#b9b7ad"/><path d="M19 2 Q23 -1 27 2 L27.5 9 L18.5 9 Z" fill="#1d1a18"/><ellipse cx="23" cy="6.5" rx="2.6" ry="3.2" fill="#d9c2ad"/><path d="M17 12 Q23 10 29 12 L31 19 L28.5 20 L28 26 L31 37 Q24 39 15 37 L18 26 L17.5 20 L15 19 Z" fill="#111"/><path d="M15 18 L13.5 31 L15 32 L17 20 Z" fill="#d3b9a2"/><path d="M31 18 L32.5 30 L31 31 L29 20 Z" fill="#d3b9a2"/><rect x="18.5" y="37" width="2.4" height="7" fill="#d3b9a2"/><rect x="24" y="37" width="2.4" height="7" fill="#d3b9a2"/><rect x="16" y="42" width="4" height="3" fill="#e8efe6"/></svg><div class="a" style="left:180.8px;top:408.1px;height:24px;line-height:24px;color:#222;font-size:16px;font-weight:normal;">黑色连衣裙</div><div class="a" style="left:180.8px;top:432.3px;height:24px;line-height:24px;color:#9a9a9a;font-size:16px;font-weight:normal;"><span style="letter-spacing:1.54px;font-size:16.48px;">101110366</span></div><div class="a" style="left:383.6px;top:407.6px;height:24px;line-height:24px;color:#222;font-size:16px;font-weight:normal;"><span style="letter-spacing:0px;font-size:16.48px;">-</span></div><div class="a" style="left:451.2px;top:408.1px;height:24px;line-height:24px;color:#222;font-size:16px;font-weight:normal;"><span style="letter-spacing:0.81px;font-size:16.48px;">Temu</span>全托<span style="letter-spacing:0.81px;font-size:16.48px;">-girl clothe...</span></div><div class="a" style="left:451.2px;top:431.3px;height:24px;line-height:24px;color:#aaa;font-size:16px;font-weight:normal;"><span style="letter-spacing:0px;font-size:16.48px;">-</span></div><div class="a" style="left:654.0px;top:407.6px;height:24px;line-height:24px;color:#222;font-size:16px;font-weight:normal;"><span style="letter-spacing:0px;font-size:16.48px;">-</span></div><div class="a" style="left:788.8px;top:407.6px;height:24px;line-height:24px;color:#222;font-size:16px;font-weight:normal;"><span style="letter-spacing:0px;font-size:16.48px;">-</span></div><div class="a" style="right:1228.3px;top:408.1px;height:24px;line-height:24px;color:#222;text-align:right;font-size:16px;font-weight:normal;"><span style="letter-spacing:1.30px;margin-right:-1.30px">¥1.00</span></div><svg class="a" style="left:1014.3px;top:406.7px" width="21" height="22" viewBox="0 0 21 22" fill="none"><path d="M4.0 12.6 L13.0 3.3 L17.0 7.3 L8.0 16.6 H4.0 Z" stroke="#8a8a8a" stroke-width="1.5" stroke-linejoin="round"/><line x1="1.5" y1="20.3" x2="19.8" y2="20.3" stroke="#8a8a8a" stroke-width="1.6" stroke-linecap="round"/></svg><div class="a" style="right:924.5px;top:408.1px;height:24px;line-height:24px;color:#222;text-align:right;font-size:16px;font-weight:normal;"><span style="letter-spacing:1.70px;margin-right:-1.70px">5.00</span></div><svg class="a" style="left:1318.3px;top:406.7px" width="21" height="22" viewBox="0 0 21 22" fill="none"><path d="M4.0 12.6 L13.0 3.3 L17.0 7.3 L8.0 16.6 H4.0 Z" stroke="#8a8a8a" stroke-width="1.5" stroke-linejoin="round"/><line x1="1.5" y1="20.3" x2="19.8" y2="20.3" stroke="#8a8a8a" stroke-width="1.6" stroke-linecap="round"/></svg><div class="a" style="right:762.3px;top:408.1px;height:24px;line-height:24px;color:#222;text-align:right;font-size:16px;font-weight:normal;"><span style="letter-spacing:1.40px;margin-right:-1.40px">¥0.00</span></div><div class="a" style="right:587.0px;top:408.1px;height:24px;line-height:24px;color:#222;text-align:right;font-size:16px;font-weight:normal;"><span style="letter-spacing:1.40px;margin-right:-1.40px">¥0.00</span></div><div class="a" style="right:452.1px;top:408.1px;height:24px;line-height:24px;color:#222;text-align:right;font-size:16px;font-weight:normal;"><span style="letter-spacing:1.47px;margin-right:-1.47px">0.00</span></div><div class="a" style="right:317.0px;top:408.1px;height:24px;line-height:24px;color:#222;text-align:right;font-size:16px;font-weight:normal;"><span style="letter-spacing:1.88px;margin-right:-1.88px">0.00%</span></div><div class="a" style="right:181.9px;top:408.1px;height:24px;line-height:24px;color:#222;text-align:right;font-size:16px;font-weight:normal;"><span style="letter-spacing:1.40px;margin-right:-1.40px">¥0.00</span></div><div class="a" style="left:2086.2px;top:408.1px;height:24px;line-height:24px;color:#2e6ef0;font-size:16px;font-weight:normal;">同步数据</div><div class="a" style="left:56.3px;top:475.3px;width:19.0px;height:19.0px;border:1px solid #cfd3dc;border-radius:3px;box-sizing:border-box;background:#fff"></div><svg class="a" style="left:100.3px;top:472.3px;border-radius:4px" width="47.5" height="47.5" viewBox="-1 -1 48 48" preserveAspectRatio="none"><rect width="46" height="46" fill="#fff"/><rect x="5.5" y="0" width="35" height="46" fill="#77787a"/><rect x="5.5" y="0" width="35" height="15" fill="#a08c78"/><rect x="8" y="2" width="4" height="9" fill="#6b5a4a"/><rect x="28" y="3" width="10" height="10" fill="#8a7562"/><rect x="26" y="13" width="14.5" height="9" rx="2" fill="#2b2d33"/><rect x="5.5" y="14" width="6" height="4" fill="#3a3c42"/><path d="M14 11 Q19 8 24 11 L26 28 L24 46 L14 46 L13 28 Z" fill="#e9e1d6"/><ellipse cx="19" cy="7" rx="2.3" ry="2.8" fill="#d8c0a8"/><rect x="17.5" y="10" width="3" height="8" fill="#4a4a4a"/><ellipse cx="14" cy="34" rx="4" ry="3.5" fill="#b8bcb8"/></svg><div class="a" style="left:100.3px;top:472.3px;width:47.5px;height:47.5px;border:1px solid #e3e5eb;border-radius:4px"></div><div class="a" style="left:180.8px;top:473.0px;height:24px;line-height:24px;color:#222;font-size:16px;font-weight:normal;">时尚欧式套装</div><div class="a" style="left:180.8px;top:497.2px;height:24px;line-height:24px;color:#9a9a9a;font-size:16px;font-weight:normal;"><span style="letter-spacing:1.16px;font-size:16.48px;">101085133</span></div><div class="a" style="left:383.6px;top:472.5px;height:24px;line-height:24px;color:#222;font-size:16px;font-weight:normal;"><span style="letter-spacing:0px;font-size:16.48px;">-</span></div><div class="a" style="left:451.2px;top:473.0px;height:24px;line-height:24px;color:#222;font-size:16px;font-weight:normal;"><span style="letter-spacing:0.81px;font-size:16.48px;">Temu</span>全托<span style="letter-spacing:0.81px;font-size:16.48px;">-girl clothe...</span></div><div class="a" style="left:451.2px;top:496.2px;height:24px;line-height:24px;color:#aaa;font-size:16px;font-weight:normal;"><span style="letter-spacing:0px;font-size:16.48px;">-</span></div><div class="a" style="left:654.0px;top:472.5px;height:24px;line-height:24px;color:#222;font-size:16px;font-weight:normal;"><span style="letter-spacing:0px;font-size:16.48px;">-</span></div><div class="a" style="left:788.8px;top:472.5px;height:24px;line-height:24px;color:#222;font-size:16px;font-weight:normal;"><span style="letter-spacing:0px;font-size:16.48px;">-</span></div><div class="a" style="right:1228.3px;top:473.0px;height:24px;line-height:24px;color:#222;text-align:right;font-size:16px;font-weight:normal;"><span style="letter-spacing:1.30px;margin-right:-1.30px">¥1.00</span></div><svg class="a" style="left:1014.3px;top:471.6px" width="21" height="22" viewBox="0 0 21 22" fill="none"><path d="M4.0 12.6 L13.0 3.3 L17.0 7.3 L8.0 16.6 H4.0 Z" stroke="#8a8a8a" stroke-width="1.5" stroke-linejoin="round"/><line x1="1.5" y1="20.3" x2="19.8" y2="20.3" stroke="#8a8a8a" stroke-width="1.6" stroke-linecap="round"/></svg><div class="a" style="right:924.5px;top:473.0px;height:24px;line-height:24px;color:#222;text-align:right;font-size:16px;font-weight:normal;"><span style="letter-spacing:1.70px;margin-right:-1.70px">5.00</span></div><svg class="a" style="left:1318.3px;top:471.6px" width="21" height="22" viewBox="0 0 21 22" fill="none"><path d="M4.0 12.6 L13.0 3.3 L17.0 7.3 L8.0 16.6 H4.0 Z" stroke="#8a8a8a" stroke-width="1.5" stroke-linejoin="round"/><line x1="1.5" y1="20.3" x2="19.8" y2="20.3" stroke="#8a8a8a" stroke-width="1.6" stroke-linecap="round"/></svg><div class="a" style="right:762.3px;top:473.0px;height:24px;line-height:24px;color:#222;text-align:right;font-size:16px;font-weight:normal;"><span style="letter-spacing:1.40px;margin-right:-1.40px">¥0.00</span></div><div class="a" style="right:587.0px;top:473.0px;height:24px;line-height:24px;color:#222;text-align:right;font-size:16px;font-weight:normal;"><span style="letter-spacing:1.40px;margin-right:-1.40px">¥0.00</span></div><div class="a" style="right:452.1px;top:473.0px;height:24px;line-height:24px;color:#222;text-align:right;font-size:16px;font-weight:normal;"><span style="letter-spacing:1.47px;margin-right:-1.47px">0.00</span></div><div class="a" style="right:317.0px;top:473.0px;height:24px;line-height:24px;color:#222;text-align:right;font-size:16px;font-weight:normal;"><span style="letter-spacing:1.88px;margin-right:-1.88px">0.00%</span></div><div class="a" style="right:181.9px;top:473.0px;height:24px;line-height:24px;color:#222;text-align:right;font-size:16px;font-weight:normal;"><span style="letter-spacing:1.40px;margin-right:-1.40px">¥0.00</span></div><div class="a" style="left:2086.2px;top:473.0px;height:24px;line-height:24px;color:#2e6ef0;font-size:16px;font-weight:normal;">同步数据</div><div class="a" style="left:56.3px;top:540.6px;width:19.0px;height:19.0px;border:1px solid #cfd3dc;border-radius:3px;box-sizing:border-box;background:#fff"></div><svg class="a" style="left:100.6px;top:539.2px;border-radius:3px" width="46.5" height="46.5" viewBox="0 0 46 46" preserveAspectRatio="none"><rect width="46" height="46" fill="#d4d0c6"/><path d="M33 3 L42 6 L40 15 L44 17 L42 32 L35 30 Z" fill="#d98cc0"/><path d="M16 0 Q23 -2 28 2 L28 9 Q22 12 16 8 Z" fill="#c69a6a"/><rect x="16" y="3" width="11" height="2" fill="#777"/><path d="M8 14 Q22 8 37 13 L43 28 L37 31 L36 46 L11 46 L10 30 L3 28 Z" fill="#1f1d1e"/><path d="M15 20 Q24 16 31 21 L30 36 Q22 39 16 35 Z" fill="#7b7b7b" opacity="0.75"/><path d="M36 29 L42 29 L40 44 L34 46 Z" fill="#caa286"/></svg><div class="a" style="left:180.8px;top:538.3px;height:24px;line-height:24px;color:#222;font-size:16px;font-weight:normal;"><span style="letter-spacing:1.6px;font-size:16.48px;">T</span>恤</div><div class="a" style="left:180.8px;top:562.5px;height:24px;line-height:24px;color:#9a9a9a;font-size:16px;font-weight:normal;"><span style="letter-spacing:1.16px;font-size:16.48px;">100792876</span></div><div class="a" style="left:383.6px;top:537.8px;height:24px;line-height:24px;color:#222;font-size:16px;font-weight:normal;"><span style="letter-spacing:0px;font-size:16.48px;">-</span></div><div class="a" style="left:451.2px;top:538.3px;height:24px;line-height:24px;color:#222;font-size:16px;font-weight:normal;"><span style="letter-spacing:0.81px;font-size:16.48px;">Temu</span>全托<span style="letter-spacing:0.81px;font-size:16.48px;">-girl clothe...</span></div><div class="a" style="left:451.2px;top:561.5px;height:24px;line-height:24px;color:#aaa;font-size:16px;font-weight:normal;"><span style="letter-spacing:0px;font-size:16.48px;">-</span></div><div class="a" style="left:654.0px;top:537.8px;height:24px;line-height:24px;color:#222;font-size:16px;font-weight:normal;"><span style="letter-spacing:0px;font-size:16.48px;">-</span></div><div class="a" style="left:788.8px;top:537.8px;height:24px;line-height:24px;color:#222;font-size:16px;font-weight:normal;"><span style="letter-spacing:0px;font-size:16.48px;">-</span></div><div class="a" style="right:1228.3px;top:538.3px;height:24px;line-height:24px;color:#222;text-align:right;font-size:16px;font-weight:normal;"><span style="letter-spacing:1.30px;margin-right:-1.30px">¥1.00</span></div><svg class="a" style="left:1014.3px;top:536.9px" width="21" height="22" viewBox="0 0 21 22" fill="none"><path d="M4.0 12.6 L13.0 3.3 L17.0 7.3 L8.0 16.6 H4.0 Z" stroke="#8a8a8a" stroke-width="1.5" stroke-linejoin="round"/><line x1="1.5" y1="20.3" x2="19.8" y2="20.3" stroke="#8a8a8a" stroke-width="1.6" stroke-linecap="round"/></svg><div class="a" style="right:924.5px;top:538.3px;height:24px;line-height:24px;color:#222;text-align:right;font-size:16px;font-weight:normal;"><span style="letter-spacing:1.70px;margin-right:-1.70px">5.00</span></div><svg class="a" style="left:1318.3px;top:536.9px" width="21" height="22" viewBox="0 0 21 22" fill="none"><path d="M4.0 12.6 L13.0 3.3 L17.0 7.3 L8.0 16.6 H4.0 Z" stroke="#8a8a8a" stroke-width="1.5" stroke-linejoin="round"/><line x1="1.5" y1="20.3" x2="19.8" y2="20.3" stroke="#8a8a8a" stroke-width="1.6" stroke-linecap="round"/></svg><div class="a" style="right:762.3px;top:538.3px;height:24px;line-height:24px;color:#222;text-align:right;font-size:16px;font-weight:normal;"><span style="letter-spacing:1.40px;margin-right:-1.40px">¥0.00</span></div><div class="a" style="right:587.0px;top:538.3px;height:24px;line-height:24px;color:#222;text-align:right;font-size:16px;font-weight:normal;"><span style="letter-spacing:1.40px;margin-right:-1.40px">¥0.00</span></div><div class="a" style="right:452.1px;top:538.3px;height:24px;line-height:24px;color:#222;text-align:right;font-size:16px;font-weight:normal;"><span style="letter-spacing:1.47px;margin-right:-1.47px">0.00</span></div><div class="a" style="right:317.0px;top:538.3px;height:24px;line-height:24px;color:#222;text-align:right;font-size:16px;font-weight:normal;"><span style="letter-spacing:1.88px;margin-right:-1.88px">0.00%</span></div><div class="a" style="right:181.9px;top:538.3px;height:24px;line-height:24px;color:#222;text-align:right;font-size:16px;font-weight:normal;"><span style="letter-spacing:1.40px;margin-right:-1.40px">¥0.00</span></div><div class="a" style="left:2086.2px;top:538.3px;height:24px;line-height:24px;color:#2e6ef0;font-size:16px;font-weight:normal;">同步数据</div><div class="a" style="left:56.3px;top:605.4px;width:19.0px;height:19.0px;border:1px solid #cfd3dc;border-radius:3px;box-sizing:border-box;background:#fff"></div><svg class="a" style="left:100.6px;top:604.0px;border-radius:3px" width="46.5" height="46.5" viewBox="0 0 46 46" preserveAspectRatio="none"><rect width="46" height="46" fill="#55504b"/><rect x="30" y="0" width="16" height="46" fill="#e4e0d8"/><rect x="0" y="34" width="30" height="12" fill="#8a7350"/><path d="M0 24 L14 24 L14 32 L0 33 Z" fill="#7a4520"/><rect x="3" y="32" width="1.6" height="10" fill="#3a2a1a"/><rect x="11" y="32" width="1.6" height="10" fill="#3a2a1a"/><path d="M17 0 L27 0 L28 14 L32 44 L14 44 L17 14 Z" fill="#ecebe6"/><path d="M16 2 L13.5 20 L15 21 L18 6 Z" fill="#d3b59c"/><path d="M28 2 L30 20 L28.5 21 L26.5 6 Z" fill="#d3b59c"/><path d="M19 22 L25 27 M18 32 L27 30 M21 38 L26 36" stroke="#4d5a6a" stroke-width="1.3"/></svg><div class="a" style="left:180.8px;top:603.1px;height:24px;line-height:24px;color:#222;font-size:16px;font-weight:normal;">挂历</div><div class="a" style="left:180.8px;top:627.3px;height:24px;line-height:24px;color:#9a9a9a;font-size:16px;font-weight:normal;"><span style="letter-spacing:1.16px;font-size:16.48px;">122485898</span></div><div class="a" style="left:383.6px;top:602.6px;height:24px;line-height:24px;color:#222;font-size:16px;font-weight:normal;"><span style="letter-spacing:0px;font-size:16.48px;">-</span></div><div class="a" style="left:451.2px;top:603.1px;height:24px;line-height:24px;color:#222;font-size:16px;font-weight:normal;"><span style="letter-spacing:1.40px;font-size:16.48px;">Temu</span>全托<span style="letter-spacing:1.40px;font-size:16.48px;">-</span>自测使用</div><div class="a" style="left:451.2px;top:626.3px;height:24px;line-height:24px;color:#aaa;font-size:16px;font-weight:normal;"><span style="letter-spacing:0px;font-size:16.48px;">-</span></div><div class="a" style="left:654.0px;top:602.6px;height:24px;line-height:24px;color:#222;font-size:16px;font-weight:normal;"><span style="letter-spacing:0px;font-size:16.48px;">-</span></div><div class="a" style="left:788.8px;top:602.6px;height:24px;line-height:24px;color:#222;font-size:16px;font-weight:normal;"><span style="letter-spacing:0px;font-size:16.48px;">-</span></div><div class="a" style="right:1228.3px;top:603.1px;height:24px;line-height:24px;color:#222;text-align:right;font-size:16px;font-weight:normal;"><span style="letter-spacing:1.30px;margin-right:-1.30px">¥1.30</span></div><svg class="a" style="left:1014.3px;top:601.7px" width="21" height="22" viewBox="0 0 21 22" fill="none"><path d="M4.0 12.6 L13.0 3.3 L17.0 7.3 L8.0 16.6 H4.0 Z" stroke="#8a8a8a" stroke-width="1.5" stroke-linejoin="round"/><line x1="1.5" y1="20.3" x2="19.8" y2="20.3" stroke="#8a8a8a" stroke-width="1.6" stroke-linecap="round"/></svg><div class="a" style="right:924.5px;top:603.1px;height:24px;line-height:24px;color:#222;text-align:right;font-size:16px;font-weight:normal;"><span style="letter-spacing:1.70px;margin-right:-1.70px">3.33</span></div><svg class="a" style="left:1318.3px;top:601.7px" width="21" height="22" viewBox="0 0 21 22" fill="none"><path d="M4.0 12.6 L13.0 3.3 L17.0 7.3 L8.0 16.6 H4.0 Z" stroke="#8a8a8a" stroke-width="1.5" stroke-linejoin="round"/><line x1="1.5" y1="20.3" x2="19.8" y2="20.3" stroke="#8a8a8a" stroke-width="1.6" stroke-linecap="round"/></svg><div class="a" style="right:762.3px;top:603.1px;height:24px;line-height:24px;color:#222;text-align:right;font-size:16px;font-weight:normal;"><span style="letter-spacing:1.40px;margin-right:-1.40px">¥0.00</span></div><div class="a" style="right:587.0px;top:603.1px;height:24px;line-height:24px;color:#222;text-align:right;font-size:16px;font-weight:normal;"><span style="letter-spacing:1.40px;margin-right:-1.40px">¥0.00</span></div><div class="a" style="right:452.1px;top:603.1px;height:24px;line-height:24px;color:#222;text-align:right;font-size:16px;font-weight:normal;"><span style="letter-spacing:1.47px;margin-right:-1.47px">0.00</span></div><div class="a" style="right:317.0px;top:603.1px;height:24px;line-height:24px;color:#222;text-align:right;font-size:16px;font-weight:normal;"><span style="letter-spacing:1.88px;margin-right:-1.88px">0.00%</span></div><div class="a" style="right:181.9px;top:603.1px;height:24px;line-height:24px;color:#222;text-align:right;font-size:16px;font-weight:normal;"><span style="letter-spacing:1.40px;margin-right:-1.40px">¥0.00</span></div><div class="a" style="left:2086.2px;top:603.1px;height:24px;line-height:24px;color:#2e6ef0;font-size:16px;font-weight:normal;">同步数据</div><div class="a" style="left:56.3px;top:670.5px;width:19.0px;height:19.0px;border:1px solid #cfd3dc;border-radius:3px;box-sizing:border-box;background:#fff"></div><svg class="a" style="left:100.3px;top:667.5px;border-radius:4px" width="47.5" height="47.5" viewBox="-1 -1 48 48" preserveAspectRatio="none"><rect width="46" height="46" fill="#fdfdfd"/><path d="M22 4 Q30 2 33 6 L35 24 L33 30 L30 26 Z" fill="#3aa8b6"/><path d="M19 5 Q22 3 25 5 L25 8 L19 8 Z" fill="#2a3a3a"/><path d="M11 17 Q18 8 26 10 Q32 14 32 24 L33 39 Q22 44 10 39 Z" fill="#36a6b5"/><path d="M11 17 Q18 12 26 14 L27 20 L11 22 Z" fill="#9fa9ac"/><rect x="12" y="22" width="13" height="14" rx="1" fill="#f3941c"/><rect x="18" y="22" width="1" height="14" fill="#c67010"/><path d="M32 27 L40 37 L38 40 L31 33" fill="#1d1d1d"/><path d="M10 36 L26 36 L25 40 L11 40 Z" fill="#8fa0a4"/></svg><div class="a" style="left:100.3px;top:667.5px;width:47.5px;height:47.5px;border:1px solid #e3e5eb;border-radius:4px"></div><div class="a" style="left:180.8px;top:668.2px;height:24px;line-height:24px;color:#222;font-size:16px;font-weight:normal;"><span style="letter-spacing:0.60px;font-size:16.48px;">Chest Bag For Men ...</span></div><div class="a" style="left:180.8px;top:692.4px;height:24px;line-height:24px;color:#9a9a9a;font-size:16px;font-weight:normal;"><span style="letter-spacing:1.41px;font-size:16.48px;">1205118356</span></div><div class="a" style="left:383.6px;top:667.7px;height:24px;line-height:24px;color:#222;font-size:16px;font-weight:normal;"><span style="letter-spacing:0px;font-size:16.48px;">-</span></div><div class="a" style="left:451.2px;top:668.2px;height:24px;line-height:24px;color:#222;font-size:16px;font-weight:normal;"><span style="letter-spacing:1.40px;font-size:16.48px;">Temu</span>全托<span style="letter-spacing:1.40px;font-size:16.48px;">-</span>自测使用</div><div class="a" style="left:451.2px;top:691.4px;height:24px;line-height:24px;color:#aaa;font-size:16px;font-weight:normal;"><span style="letter-spacing:0px;font-size:16.48px;">-</span></div><div class="a" style="left:654.0px;top:667.7px;height:24px;line-height:24px;color:#222;font-size:16px;font-weight:normal;"><span style="letter-spacing:0px;font-size:16.48px;">-</span></div><div class="a" style="left:788.8px;top:667.7px;height:24px;line-height:24px;color:#222;font-size:16px;font-weight:normal;"><span style="letter-spacing:0px;font-size:16.48px;">-</span></div><div class="a" style="right:1228.3px;top:668.2px;height:24px;line-height:24px;color:#222;text-align:right;font-size:16px;font-weight:normal;"><span style="letter-spacing:1.30px;margin-right:-1.30px">¥1.00</span></div><svg class="a" style="left:1014.3px;top:666.8px" width="21" height="22" viewBox="0 0 21 22" fill="none"><path d="M4.0 12.6 L13.0 3.3 L17.0 7.3 L8.0 16.6 H4.0 Z" stroke="#8a8a8a" stroke-width="1.5" stroke-linejoin="round"/><line x1="1.5" y1="20.3" x2="19.8" y2="20.3" stroke="#8a8a8a" stroke-width="1.6" stroke-linecap="round"/></svg><div class="a" style="right:924.5px;top:668.2px;height:24px;line-height:24px;color:#222;text-align:right;font-size:16px;font-weight:normal;"><span style="letter-spacing:1.70px;margin-right:-1.70px">2.22</span></div><svg class="a" style="left:1318.3px;top:666.8px" width="21" height="22" viewBox="0 0 21 22" fill="none"><path d="M4.0 12.6 L13.0 3.3 L17.0 7.3 L8.0 16.6 H4.0 Z" stroke="#8a8a8a" stroke-width="1.5" stroke-linejoin="round"/><line x1="1.5" y1="20.3" x2="19.8" y2="20.3" stroke="#8a8a8a" stroke-width="1.6" stroke-linecap="round"/></svg><div class="a" style="right:762.3px;top:668.2px;height:24px;line-height:24px;color:#222;text-align:right;font-size:16px;font-weight:normal;"><span style="letter-spacing:1.40px;margin-right:-1.40px">¥0.00</span></div><div class="a" style="right:587.0px;top:668.2px;height:24px;line-height:24px;color:#222;text-align:right;font-size:16px;font-weight:normal;"><span style="letter-spacing:1.40px;margin-right:-1.40px">¥0.00</span></div><div class="a" style="right:452.1px;top:668.2px;height:24px;line-height:24px;color:#222;text-align:right;font-size:16px;font-weight:normal;"><span style="letter-spacing:1.47px;margin-right:-1.47px">0.00</span></div><div class="a" style="right:317.0px;top:668.2px;height:24px;line-height:24px;color:#222;text-align:right;font-size:16px;font-weight:normal;"><span style="letter-spacing:1.88px;margin-right:-1.88px">0.00%</span></div><div class="a" style="right:181.9px;top:668.2px;height:24px;line-height:24px;color:#222;text-align:right;font-size:16px;font-weight:normal;"><span style="letter-spacing:1.40px;margin-right:-1.40px">¥0.00</span></div><div class="a" style="left:2086.2px;top:668.2px;height:24px;line-height:24px;color:#2e6ef0;font-size:16px;font-weight:normal;">同步数据</div><div class="a" style="left:56.3px;top:734.5px;width:19.0px;height:19.0px;border:1px solid #cfd3dc;border-radius:3px;box-sizing:border-box;background:#fff"></div><svg class="a" style="left:100.6px;top:733.1px;border-radius:3px" width="46.5" height="46.5" viewBox="0 0 46 46" preserveAspectRatio="none"><rect width="46" height="46" fill="#a8774a"/><rect width="46" height="6" fill="#8b8680"/><path d="M0 6 Q20 3 46 5 L46 8 Q20 6 0 9 Z" fill="#b98859"/><g transform="rotate(18 23 23)"><rect x="1" y="12" width="7" height="20" rx="1.5" fill="#4b4c5e"/><rect x="8" y="12" width="7" height="20" rx="1.5" fill="#efe4cf"/><rect x="15" y="12" width="7" height="20" rx="1.5" fill="#6d9988"/><rect x="22" y="12" width="7" height="20" rx="1.5" fill="#d7d6ee"/><rect x="29" y="12" width="7" height="20" rx="1.5" fill="#1d2d6e"/><rect x="36" y="12" width="8" height="20" rx="1.5" fill="#f4e8e4"/></g><rect x="37" y="1" width="8" height="13" rx="2" fill="#e8e6e2"/><circle cx="41" cy="8" r="2.4" fill="#2f6a52"/></svg><div class="a" style="left:180.8px;top:732.2px;height:24px;line-height:24px;color:#222;font-size:16px;font-weight:normal;">苹果<span style="letter-spacing:0.75px;font-size:16.48px;">15</span>手机壳液态硅<span style="letter-spacing:0.75px;font-size:16.48px;">...</span></div><div class="a" style="left:180.8px;top:756.4px;height:24px;line-height:24px;color:#9a9a9a;font-size:16px;font-weight:normal;"><span style="letter-spacing:1.16px;font-size:16.48px;">120855734</span></div><div class="a" style="left:383.6px;top:731.7px;height:24px;line-height:24px;color:#222;font-size:16px;font-weight:normal;"><span style="letter-spacing:0px;font-size:16.48px;">-</span></div><div class="a" style="left:451.2px;top:732.2px;height:24px;line-height:24px;color:#222;font-size:16px;font-weight:normal;"><span style="letter-spacing:1.40px;font-size:16.48px;">Temu</span>全托<span style="letter-spacing:1.40px;font-size:16.48px;">-</span>自测使用</div><div class="a" style="left:451.2px;top:755.4px;height:24px;line-height:24px;color:#aaa;font-size:16px;font-weight:normal;"><span style="letter-spacing:0px;font-size:16.48px;">-</span></div><div class="a" style="left:654.0px;top:731.7px;height:24px;line-height:24px;color:#222;font-size:16px;font-weight:normal;"><span style="letter-spacing:0px;font-size:16.48px;">-</span></div><div class="a" style="left:788.8px;top:731.7px;height:24px;line-height:24px;color:#222;font-size:16px;font-weight:normal;"><span style="letter-spacing:0px;font-size:16.48px;">-</span></div><div class="a" style="right:1228.3px;top:732.2px;height:24px;line-height:24px;color:#222;text-align:right;font-size:16px;font-weight:normal;"><span style="letter-spacing:1.80px;margin-right:-1.80px">¥1.11</span></div><svg class="a" style="left:1014.3px;top:730.8px" width="21" height="22" viewBox="0 0 21 22" fill="none"><path d="M4.0 12.6 L13.0 3.3 L17.0 7.3 L8.0 16.6 H4.0 Z" stroke="#8a8a8a" stroke-width="1.5" stroke-linejoin="round"/><line x1="1.5" y1="20.3" x2="19.8" y2="20.3" stroke="#8a8a8a" stroke-width="1.6" stroke-linecap="round"/></svg><div class="a" style="right:924.5px;top:732.2px;height:24px;line-height:24px;color:#222;text-align:right;font-size:16px;font-weight:normal;"><span style="letter-spacing:1.70px;margin-right:-1.70px">1.00</span></div><svg class="a" style="left:1318.3px;top:730.8px" width="21" height="22" viewBox="0 0 21 22" fill="none"><path d="M4.0 12.6 L13.0 3.3 L17.0 7.3 L8.0 16.6 H4.0 Z" stroke="#8a8a8a" stroke-width="1.5" stroke-linejoin="round"/><line x1="1.5" y1="20.3" x2="19.8" y2="20.3" stroke="#8a8a8a" stroke-width="1.6" stroke-linecap="round"/></svg><div class="a" style="right:762.3px;top:732.2px;height:24px;line-height:24px;color:#222;text-align:right;font-size:16px;font-weight:normal;"><span style="letter-spacing:1.40px;margin-right:-1.40px">¥0.00</span></div><div class="a" style="right:587.0px;top:732.2px;height:24px;line-height:24px;color:#222;text-align:right;font-size:16px;font-weight:normal;"><span style="letter-spacing:1.40px;margin-right:-1.40px">¥0.00</span></div><div class="a" style="right:452.1px;top:732.2px;height:24px;line-height:24px;color:#222;text-align:right;font-size:16px;font-weight:normal;"><span style="letter-spacing:1.47px;margin-right:-1.47px">0.00</span></div><div class="a" style="right:317.0px;top:732.2px;height:24px;line-height:24px;color:#222;text-align:right;font-size:16px;font-weight:normal;"><span style="letter-spacing:1.88px;margin-right:-1.88px">0.00%</span></div><div class="a" style="right:181.9px;top:732.2px;height:24px;line-height:24px;color:#222;text-align:right;font-size:16px;font-weight:normal;"><span style="letter-spacing:1.40px;margin-right:-1.40px">¥0.00</span></div><div class="a" style="left:2086.2px;top:732.2px;height:24px;line-height:24px;color:#2e6ef0;font-size:16px;font-weight:normal;">同步数据</div><div class="a" style="left:56.3px;top:799.3px;width:19.0px;height:19.0px;border:1px solid #cfd3dc;border-radius:3px;box-sizing:border-box;background:#fff"></div><svg class="a" style="left:100.3px;top:796.3px;border-radius:4px" width="47.5" height="47.5" viewBox="-1 -1 48 48" preserveAspectRatio="none"><rect width="46" height="46" fill="#fdfdfd"/><path d="M6 27 Q7 13 22 12 Q33 12 36 22 L37 27 Q22 30 6 27 Z" fill="#d9cfbc"/><path d="M9 27 Q25 31 41 26 L41 28 Q25 33 9 29 Z" fill="#c9bfa9"/><rect x="21" y="18" width="9" height="7" rx="2" fill="#6a7a4a"/><rect x="23" y="20" width="5" height="3" fill="#c4502a"/></svg><div class="a" style="left:100.3px;top:796.3px;width:47.5px;height:47.5px;border:1px solid #e3e5eb;border-radius:4px"></div><div class="a" style="left:180.8px;top:797.0px;height:24px;line-height:24px;color:#222;font-size:16px;font-weight:normal;">服饰类目<span style="letter-spacing:1.00px;font-size:16.48px;"> 2024</span>新款奶<span style="letter-spacing:1.00px;font-size:16.48px;">...</span></div><div class="a" style="left:180.8px;top:821.2px;height:24px;line-height:24px;color:#9a9a9a;font-size:16px;font-weight:normal;"><span style="letter-spacing:1.30px;font-size:16.48px;">1212442047</span></div><div class="a" style="left:383.6px;top:796.5px;height:24px;line-height:24px;color:#222;font-size:16px;font-weight:normal;"><span style="letter-spacing:0px;font-size:16.48px;">-</span></div><div class="a" style="left:451.2px;top:797.0px;height:24px;line-height:24px;color:#222;font-size:16px;font-weight:normal;"><span style="letter-spacing:1.40px;font-size:16.48px;">Temu</span>全托<span style="letter-spacing:1.40px;font-size:16.48px;">-</span>自测使用</div><div class="a" style="left:451.2px;top:820.2px;height:24px;line-height:24px;color:#aaa;font-size:16px;font-weight:normal;"><span style="letter-spacing:0px;font-size:16.48px;">-</span></div><div class="a" style="left:654.0px;top:796.5px;height:24px;line-height:24px;color:#222;font-size:16px;font-weight:normal;"><span style="letter-spacing:0px;font-size:16.48px;">-</span></div><div class="a" style="left:788.8px;top:796.5px;height:24px;line-height:24px;color:#222;font-size:16px;font-weight:normal;"><span style="letter-spacing:0px;font-size:16.48px;">-</span></div><div class="a" style="right:1228.3px;top:797.0px;height:24px;line-height:24px;color:#222;text-align:right;font-size:16px;font-weight:normal;"><span style="letter-spacing:1.30px;margin-right:-1.30px">¥1.10</span></div><svg class="a" style="left:1014.3px;top:795.6px" width="21" height="22" viewBox="0 0 21 22" fill="none"><path d="M4.0 12.6 L13.0 3.3 L17.0 7.3 L8.0 16.6 H4.0 Z" stroke="#8a8a8a" stroke-width="1.5" stroke-linejoin="round"/><line x1="1.5" y1="20.3" x2="19.8" y2="20.3" stroke="#8a8a8a" stroke-width="1.6" stroke-linecap="round"/></svg><div class="a" style="right:924.5px;top:797.0px;height:24px;line-height:24px;color:#222;text-align:right;font-size:16px;font-weight:normal;"><span style="letter-spacing:1.70px;margin-right:-1.70px">3.00</span></div><svg class="a" style="left:1318.3px;top:795.6px" width="21" height="22" viewBox="0 0 21 22" fill="none"><path d="M4.0 12.6 L13.0 3.3 L17.0 7.3 L8.0 16.6 H4.0 Z" stroke="#8a8a8a" stroke-width="1.5" stroke-linejoin="round"/><line x1="1.5" y1="20.3" x2="19.8" y2="20.3" stroke="#8a8a8a" stroke-width="1.6" stroke-linecap="round"/></svg><div class="a" style="right:762.3px;top:797.0px;height:24px;line-height:24px;color:#222;text-align:right;font-size:16px;font-weight:normal;"><span style="letter-spacing:1.40px;margin-right:-1.40px">¥0.00</span></div><div class="a" style="right:587.0px;top:797.0px;height:24px;line-height:24px;color:#222;text-align:right;font-size:16px;font-weight:normal;"><span style="letter-spacing:1.40px;margin-right:-1.40px">¥0.00</span></div><div class="a" style="right:452.1px;top:797.0px;height:24px;line-height:24px;color:#222;text-align:right;font-size:16px;font-weight:normal;"><span style="letter-spacing:1.47px;margin-right:-1.47px">0.00</span></div><div class="a" style="right:317.0px;top:797.0px;height:24px;line-height:24px;color:#222;text-align:right;font-size:16px;font-weight:normal;"><span style="letter-spacing:1.88px;margin-right:-1.88px">0.00%</span></div><div class="a" style="right:181.9px;top:797.0px;height:24px;line-height:24px;color:#222;text-align:right;font-size:16px;font-weight:normal;"><span style="letter-spacing:1.40px;margin-right:-1.40px">¥0.00</span></div><div class="a" style="left:2086.2px;top:797.0px;height:24px;line-height:24px;color:#2e6ef0;font-size:16px;font-weight:normal;">同步数据</div><div class="a" style="left:56.3px;top:864.4px;width:19.0px;height:19.0px;border:1px solid #cfd3dc;border-radius:3px;box-sizing:border-box;background:#fff"></div><svg class="a" style="left:100.3px;top:861.4px;border-radius:4px" width="47.5" height="47.5" viewBox="-1 -1 48 48" preserveAspectRatio="none"><rect width="46" height="46" fill="#fdfdfd"/><g stroke-linecap="round"><g stroke="#857652" stroke-width="2.6"><line x1="3" y1="18" x2="17" y2="35"/><line x1="9" y1="12" x2="19" y2="34"/><line x1="17" y1="9" x2="21" y2="33"/><line x1="27" y1="9" x2="23" y2="33"/><line x1="35" y1="12" x2="25" y2="34"/><line x1="43" y1="18" x2="27" y2="35"/></g><g stroke="#222" stroke-width="2.6"><line x1="2.5" y1="17.5" x2="4" y2="19.2"/><line x1="8.7" y1="11.3" x2="9.6" y2="13.4"/><line x1="16.8" y1="8.5" x2="17.2" y2="10.6"/><line x1="27.2" y1="8.5" x2="26.8" y2="10.6"/><line x1="35.3" y1="11.3" x2="34.4" y2="13.4"/><line x1="43.5" y1="17.5" x2="42" y2="19.2"/></g></g></svg><div class="a" style="left:100.3px;top:861.4px;width:47.5px;height:47.5px;border:1px solid #e3e5eb;border-radius:4px"></div><div class="a" style="left:180.8px;top:862.1px;height:24px;line-height:24px;color:#222;font-size:16px;font-weight:normal;">黑色生日蜡烛<span style="letter-spacing:0.76px;font-size:16.48px;"> – 2 </span>件<span style="letter-spacing:0.76px;font-size:16.48px;">...</span></div><div class="a" style="left:180.8px;top:886.3px;height:24px;line-height:24px;color:#9a9a9a;font-size:16px;font-weight:normal;"><span style="letter-spacing:1.16px;font-size:16.48px;">125128475</span></div><div class="a" style="left:383.6px;top:861.6px;height:24px;line-height:24px;color:#222;font-size:16px;font-weight:normal;"><span style="letter-spacing:0px;font-size:16.48px;">-</span></div><div class="a" style="left:451.2px;top:862.1px;height:24px;line-height:24px;color:#222;font-size:16px;font-weight:normal;"><span style="letter-spacing:1.40px;font-size:16.48px;">Temu</span>全托<span style="letter-spacing:1.40px;font-size:16.48px;">-</span>自测使用</div><div class="a" style="left:451.2px;top:885.3px;height:24px;line-height:24px;color:#aaa;font-size:16px;font-weight:normal;"><span style="letter-spacing:0px;font-size:16.48px;">-</span></div><div class="a" style="left:654.0px;top:861.6px;height:24px;line-height:24px;color:#222;font-size:16px;font-weight:normal;"><span style="letter-spacing:0px;font-size:16.48px;">-</span></div><div class="a" style="left:788.8px;top:861.6px;height:24px;line-height:24px;color:#222;font-size:16px;font-weight:normal;"><span style="letter-spacing:0px;font-size:16.48px;">-</span></div><div class="a" style="right:1228.3px;top:862.1px;height:24px;line-height:24px;color:#222;text-align:right;font-size:16px;font-weight:normal;"><span style="letter-spacing:1.30px;margin-right:-1.30px">¥2.00</span></div><svg class="a" style="left:1014.3px;top:860.7px" width="21" height="22" viewBox="0 0 21 22" fill="none"><path d="M4.0 12.6 L13.0 3.3 L17.0 7.3 L8.0 16.6 H4.0 Z" stroke="#8a8a8a" stroke-width="1.5" stroke-linejoin="round"/><line x1="1.5" y1="20.3" x2="19.8" y2="20.3" stroke="#8a8a8a" stroke-width="1.6" stroke-linecap="round"/></svg><div class="a" style="right:924.5px;top:862.1px;height:24px;line-height:24px;color:#222;text-align:right;font-size:16px;font-weight:normal;"><span style="letter-spacing:1.70px;margin-right:-1.70px">8.00</span></div><svg class="a" style="left:1318.3px;top:860.7px" width="21" height="22" viewBox="0 0 21 22" fill="none"><path d="M4.0 12.6 L13.0 3.3 L17.0 7.3 L8.0 16.6 H4.0 Z" stroke="#8a8a8a" stroke-width="1.5" stroke-linejoin="round"/><line x1="1.5" y1="20.3" x2="19.8" y2="20.3" stroke="#8a8a8a" stroke-width="1.6" stroke-linecap="round"/></svg><div class="a" style="right:762.3px;top:862.1px;height:24px;line-height:24px;color:#222;text-align:right;font-size:16px;font-weight:normal;"><span style="letter-spacing:1.40px;margin-right:-1.40px">¥0.00</span></div><div class="a" style="right:587.0px;top:862.1px;height:24px;line-height:24px;color:#222;text-align:right;font-size:16px;font-weight:normal;"><span style="letter-spacing:1.40px;margin-right:-1.40px">¥0.00</span></div><div class="a" style="right:452.1px;top:862.1px;height:24px;line-height:24px;color:#222;text-align:right;font-size:16px;font-weight:normal;"><span style="letter-spacing:1.47px;margin-right:-1.47px">0.00</span></div><div class="a" style="right:317.0px;top:862.1px;height:24px;line-height:24px;color:#222;text-align:right;font-size:16px;font-weight:normal;"><span style="letter-spacing:1.88px;margin-right:-1.88px">0.00%</span></div><div class="a" style="right:181.9px;top:862.1px;height:24px;line-height:24px;color:#222;text-align:right;font-size:16px;font-weight:normal;"><span style="letter-spacing:1.40px;margin-right:-1.40px">¥0.00</span></div><div class="a" style="left:2086.2px;top:862.1px;height:24px;line-height:24px;color:#2e6ef0;font-size:16px;font-weight:normal;">同步数据</div><div class="a" style="left:56.3px;top:929.4px;width:19.0px;height:19.0px;border:1px solid #cfd3dc;border-radius:3px;box-sizing:border-box;background:#fff"></div><div class="a" style="left:100.2px;top:926.6px;width:47.5px;height:48.0px;background:#f6f6f6;border:1px solid #e3e6ec;border-radius:4px;box-sizing:border-box"></div><div class="a" style="left:100.2px;top:938.6px;width:47.5px;height:24px;line-height:24px;text-align:center;font-size:16.5px;color:#c2c2c2">无图</div><div class="a" style="left:180.8px;top:951.3px;height:24px;line-height:24px;color:#9a9a9a;font-size:16px;font-weight:normal;"><span style="letter-spacing:1.02px;font-size:16.48px;">125642058442301...</span></div><div class="a" style="left:383.6px;top:926.6px;height:24px;line-height:24px;color:#222;font-size:16px;font-weight:normal;"><span style="letter-spacing:0px;font-size:16.48px;">-</span></div><div class="a" style="left:451.2px;top:927.1px;height:24px;line-height:24px;color:#222;font-size:16px;font-weight:normal;"><span style="letter-spacing:1.40px;font-size:16.48px;">Temu</span>全托<span style="letter-spacing:1.40px;font-size:16.48px;">-</span>自测使用</div><div class="a" style="left:451.2px;top:950.3px;height:24px;line-height:24px;color:#aaa;font-size:16px;font-weight:normal;"><span style="letter-spacing:0px;font-size:16.48px;">-</span></div><div class="a" style="left:654.0px;top:926.6px;height:24px;line-height:24px;color:#222;font-size:16px;font-weight:normal;"><span style="letter-spacing:0px;font-size:16.48px;">-</span></div><div class="a" style="left:788.8px;top:926.6px;height:24px;line-height:24px;color:#222;font-size:16px;font-weight:normal;"><span style="letter-spacing:0px;font-size:16.48px;">-</span></div><div class="a" style="right:1228.3px;top:927.1px;height:24px;line-height:24px;color:#222;text-align:right;font-size:16px;font-weight:normal;"><span style="letter-spacing:1.30px;margin-right:-1.30px">¥1.00</span></div><svg class="a" style="left:1014.3px;top:925.7px" width="21" height="22" viewBox="0 0 21 22" fill="none"><path d="M4.0 12.6 L13.0 3.3 L17.0 7.3 L8.0 16.6 H4.0 Z" stroke="#8a8a8a" stroke-width="1.5" stroke-linejoin="round"/><line x1="1.5" y1="20.3" x2="19.8" y2="20.3" stroke="#8a8a8a" stroke-width="1.6" stroke-linecap="round"/></svg><div class="a" style="right:924.5px;top:927.1px;height:24px;line-height:24px;color:#222;text-align:right;font-size:16px;font-weight:normal;"><span style="letter-spacing:1.70px;margin-right:-1.70px">5.00</span></div><svg class="a" style="left:1318.3px;top:925.7px" width="21" height="22" viewBox="0 0 21 22" fill="none"><path d="M4.0 12.6 L13.0 3.3 L17.0 7.3 L8.0 16.6 H4.0 Z" stroke="#8a8a8a" stroke-width="1.5" stroke-linejoin="round"/><line x1="1.5" y1="20.3" x2="19.8" y2="20.3" stroke="#8a8a8a" stroke-width="1.6" stroke-linecap="round"/></svg><div class="a" style="right:762.3px;top:927.1px;height:24px;line-height:24px;color:#222;text-align:right;font-size:16px;font-weight:normal;"><span style="letter-spacing:1.40px;margin-right:-1.40px">¥0.00</span></div><div class="a" style="right:587.0px;top:927.1px;height:24px;line-height:24px;color:#222;text-align:right;font-size:16px;font-weight:normal;"><span style="letter-spacing:1.40px;margin-right:-1.40px">¥0.00</span></div><div class="a" style="right:452.1px;top:927.1px;height:24px;line-height:24px;color:#222;text-align:right;font-size:16px;font-weight:normal;"><span style="letter-spacing:1.47px;margin-right:-1.47px">0.00</span></div><div class="a" style="right:317.0px;top:927.1px;height:24px;line-height:24px;color:#222;text-align:right;font-size:16px;font-weight:normal;"><span style="letter-spacing:1.88px;margin-right:-1.88px">0.00%</span></div><div class="a" style="right:181.9px;top:927.1px;height:24px;line-height:24px;color:#222;text-align:right;font-size:16px;font-weight:normal;"><span style="letter-spacing:1.40px;margin-right:-1.40px">¥0.00</span></div><div class="a" style="left:2086.2px;top:927.1px;height:24px;line-height:24px;color:#2e6ef0;font-size:16px;font-weight:normal;">同步数据</div><div class="a" style="left:56.3px;top:994.5px;width:19.0px;height:19.0px;border:1px solid #cfd3dc;border-radius:3px;box-sizing:border-box;background:#fff"></div><div class="a" style="left:100.2px;top:991.7px;width:47.5px;height:48.0px;background:#f6f6f6;border:1px solid #e3e6ec;border-radius:4px;box-sizing:border-box"></div><div class="a" style="left:100.2px;top:1003.7px;width:47.5px;height:24px;line-height:24px;text-align:center;font-size:16.5px;color:#c2c2c2">无图</div><div class="a" style="left:180.8px;top:1016.4px;height:24px;line-height:24px;color:#9a9a9a;font-size:16px;font-weight:normal;"><span style="letter-spacing:1.08px;font-size:16.48px;">141123377866142...</span></div><div class="a" style="left:383.6px;top:991.7px;height:24px;line-height:24px;color:#222;font-size:16px;font-weight:normal;"><span style="letter-spacing:0px;font-size:16.48px;">-</span></div><div class="a" style="left:451.2px;top:992.2px;height:24px;line-height:24px;color:#222;font-size:16px;font-weight:normal;"><span style="letter-spacing:1.40px;font-size:16.48px;">Temu</span>全托<span style="letter-spacing:1.40px;font-size:16.48px;">-</span>自测使用</div><div class="a" style="left:451.2px;top:1015.4px;height:24px;line-height:24px;color:#aaa;font-size:16px;font-weight:normal;"><span style="letter-spacing:0px;font-size:16.48px;">-</span></div><div class="a" style="left:654.0px;top:991.7px;height:24px;line-height:24px;color:#222;font-size:16px;font-weight:normal;"><span style="letter-spacing:0px;font-size:16.48px;">-</span></div><div class="a" style="left:788.8px;top:991.7px;height:24px;line-height:24px;color:#222;font-size:16px;font-weight:normal;"><span style="letter-spacing:0px;font-size:16.48px;">-</span></div><div class="a" style="right:1228.3px;top:992.2px;height:24px;line-height:24px;color:#222;text-align:right;font-size:16px;font-weight:normal;"><span style="letter-spacing:1.80px;margin-right:-1.80px">¥1.11</span></div><svg class="a" style="left:1014.3px;top:990.8px" width="21" height="22" viewBox="0 0 21 22" fill="none"><path d="M4.0 12.6 L13.0 3.3 L17.0 7.3 L8.0 16.6 H4.0 Z" stroke="#8a8a8a" stroke-width="1.5" stroke-linejoin="round"/><line x1="1.5" y1="20.3" x2="19.8" y2="20.3" stroke="#8a8a8a" stroke-width="1.6" stroke-linecap="round"/></svg><div class="a" style="right:924.5px;top:992.2px;height:24px;line-height:24px;color:#222;text-align:right;font-size:16px;font-weight:normal;"><span style="letter-spacing:1.70px;margin-right:-1.70px">3.00</span></div><svg class="a" style="left:1318.3px;top:990.8px" width="21" height="22" viewBox="0 0 21 22" fill="none"><path d="M4.0 12.6 L13.0 3.3 L17.0 7.3 L8.0 16.6 H4.0 Z" stroke="#8a8a8a" stroke-width="1.5" stroke-linejoin="round"/><line x1="1.5" y1="20.3" x2="19.8" y2="20.3" stroke="#8a8a8a" stroke-width="1.6" stroke-linecap="round"/></svg><div class="a" style="right:762.3px;top:992.2px;height:24px;line-height:24px;color:#222;text-align:right;font-size:16px;font-weight:normal;"><span style="letter-spacing:1.40px;margin-right:-1.40px">¥0.00</span></div><div class="a" style="right:587.0px;top:992.2px;height:24px;line-height:24px;color:#222;text-align:right;font-size:16px;font-weight:normal;"><span style="letter-spacing:1.40px;margin-right:-1.40px">¥0.00</span></div><div class="a" style="right:452.1px;top:992.2px;height:24px;line-height:24px;color:#222;text-align:right;font-size:16px;font-weight:normal;"><span style="letter-spacing:1.47px;margin-right:-1.47px">0.00</span></div><div class="a" style="right:317.0px;top:992.2px;height:24px;line-height:24px;color:#222;text-align:right;font-size:16px;font-weight:normal;"><span style="letter-spacing:1.88px;margin-right:-1.88px">0.00%</span></div><div class="a" style="right:181.9px;top:992.2px;height:24px;line-height:24px;color:#222;text-align:right;font-size:16px;font-weight:normal;"><span style="letter-spacing:1.40px;margin-right:-1.40px">¥0.00</span></div><div class="a" style="left:2086.2px;top:992.2px;height:24px;line-height:24px;color:#2e6ef0;font-size:16px;font-weight:normal;">同步数据</div><div class="a" style="left:56.3px;top:1058.5px;width:19.0px;height:19.0px;border:1px solid #cfd3dc;border-radius:3px;box-sizing:border-box;background:#fff"></div><svg class="a" style="left:100.6px;top:1057.1px;border-radius:3px" width="46.5" height="46.5" viewBox="0 0 46 46" preserveAspectRatio="none"><rect width="46" height="46" fill="#ebe7e3"/><rect x="0" y="2" width="46" height="1.2" fill="#d8d2cc"/><path d="M12 3 L17 3 L21 46 L8 46 Z" fill="#a89a8a"/><path d="M25 3 L30 3 L35 46 L21 46 Z" fill="#9e9080"/></svg><div class="a" style="left:180.8px;top:1056.2px;height:24px;line-height:24px;color:#222;font-size:16px;font-weight:normal;">惊卷测试<span style="letter-spacing:0.84px;font-size:16.48px;">350</span>子单专用<span style="letter-spacing:0.84px;font-size:16.48px;">...</span></div><div class="a" style="left:383.6px;top:1055.7px;height:24px;line-height:24px;color:#222;font-size:16px;font-weight:normal;"><span style="letter-spacing:0px;font-size:16.48px;">-</span></div><div class="a" style="left:451.2px;top:1056.2px;height:24px;line-height:24px;color:#222;font-size:16px;font-weight:normal;"><span style="letter-spacing:0.81px;font-size:16.48px;">Temu</span>全托<span style="letter-spacing:0.81px;font-size:16.48px;">-girl clothe...</span></div><div class="a" style="left:451.2px;top:1079.4px;height:24px;line-height:24px;color:#aaa;font-size:16px;font-weight:normal;"><span style="letter-spacing:0px;font-size:16.48px;">-</span></div><div class="a" style="left:654.0px;top:1055.7px;height:24px;line-height:24px;color:#222;font-size:16px;font-weight:normal;"><span style="letter-spacing:0px;font-size:16.48px;">-</span></div><div class="a" style="left:788.8px;top:1055.7px;height:24px;line-height:24px;color:#222;font-size:16px;font-weight:normal;"><span style="letter-spacing:0px;font-size:16.48px;">-</span></div><div class="a" style="right:1228.3px;top:1056.2px;height:24px;line-height:24px;color:#222;text-align:right;font-size:16px;font-weight:normal;"><span style="letter-spacing:1.30px;margin-right:-1.30px">¥4.00</span></div><svg class="a" style="left:1014.3px;top:1054.8px" width="21" height="22" viewBox="0 0 21 22" fill="none"><path d="M4.0 12.6 L13.0 3.3 L17.0 7.3 L8.0 16.6 H4.0 Z" stroke="#8a8a8a" stroke-width="1.5" stroke-linejoin="round"/><line x1="1.5" y1="20.3" x2="19.8" y2="20.3" stroke="#8a8a8a" stroke-width="1.6" stroke-linecap="round"/></svg><div class="a" style="right:924.5px;top:1056.2px;height:24px;line-height:24px;color:#222;text-align:right;font-size:16px;font-weight:normal;"><span style="letter-spacing:1.37px;margin-right:-1.37px">4.00</span></div><svg class="a" style="left:1318.3px;top:1054.8px" width="21" height="22" viewBox="0 0 21 22" fill="none"><path d="M4.0 12.6 L13.0 3.3 L17.0 7.3 L8.0 16.6 H4.0 Z" stroke="#8a8a8a" stroke-width="1.5" stroke-linejoin="round"/><line x1="1.5" y1="20.3" x2="19.8" y2="20.3" stroke="#8a8a8a" stroke-width="1.6" stroke-linecap="round"/></svg><div class="a" style="right:762.3px;top:1056.2px;height:24px;line-height:24px;color:#222;text-align:right;font-size:16px;font-weight:normal;"><span style="letter-spacing:1.40px;margin-right:-1.40px">¥0.00</span></div><div class="a" style="right:587.0px;top:1056.2px;height:24px;line-height:24px;color:#222;text-align:right;font-size:16px;font-weight:normal;"><span style="letter-spacing:1.40px;margin-right:-1.40px">¥0.00</span></div><div class="a" style="right:452.1px;top:1056.2px;height:24px;line-height:24px;color:#222;text-align:right;font-size:16px;font-weight:normal;"><span style="letter-spacing:1.47px;margin-right:-1.47px">0.00</span></div><div class="a" style="right:317.0px;top:1056.2px;height:24px;line-height:24px;color:#222;text-align:right;font-size:16px;font-weight:normal;"><span style="letter-spacing:1.88px;margin-right:-1.88px">0.00%</span></div><div class="a" style="right:181.9px;top:1056.2px;height:24px;line-height:24px;color:#222;text-align:right;font-size:16px;font-weight:normal;"><span style="letter-spacing:1.40px;margin-right:-1.40px">¥0.00</span></div><div class="a" style="left:2086.2px;top:1056.2px;height:24px;line-height:24px;color:#2e6ef0;font-size:16px;font-weight:normal;">同步数据</div></div>
<div class="a" style="left:2064.0px;top:346.4px;width:10.0px;height:731.3px;background:linear-gradient(to right,rgba(0,0,0,0),rgba(0,0,0,0.045))"></div>
<div class="a" style="left:2064.0px;top:282.8px;width:10.0px;height:62.6px;background:linear-gradient(to right,rgba(0,0,0,0),rgba(0,0,0,0.03))"></div>
<div class="a" style="left:2074.0px;top:282.8px;width:1.0px;height:794.9px;background:#eceef3"></div>
<div class="a" style="left:2189.4px;top:346.4px;width:1.0px;height:731.1px;background:#e6e9ef"></div>
<div class="a" style="left:36.1px;top:1076.9px;width:2162.9px;height:1.0px;background:#e6e9ef"></div>
<div class="a" style="left:2190.7px;top:347.0px;width:8.1px;height:354.5px;background:#c9ccd4;border-radius:4px"></div>
<div class="a" style="left:2190.4px;top:1022.6px;width:8.6px;height:1.0px;background:#e6e9ef"></div>
<div class="a" style="left:36.5px;top:1077.7px;width:1568.8px;height:9.3px;background:#cdd1d9;border-radius:5px"></div>
<div class="a" style="left:451.2px;top:1105.0px;height:24px;line-height:24px;color:#222;font-size:16px;font-weight:normal;"></div>
<div class="a" style="left:34.6px;top:1105.0px;height:24px;line-height:24px;color:#999;font-size:16px;font-weight:normal;">已选</div>
<div class="a" style="left:72.8px;top:1105.0px;height:24px;line-height:24px;color:#222;font-size:16px;font-weight:normal;">0</div>
<div class="a" style="left:87.8px;top:1105.0px;height:24px;line-height:24px;color:#999;font-size:16px;font-weight:normal;">条</div>
<div class="a" style="left:1628.3px;top:1104.7px;height:24px;line-height:24px;color:#999;font-size:16px;font-weight:normal;">共</div>
<div class="a" style="left:1649.6px;top:1104.7px;height:24px;line-height:24px;color:#222;font-size:16px;font-weight:normal;"><span style="letter-spacing:1.50px;font-size:16.48px;">42</span></div>
<div class="a" style="left:1676.8px;top:1104.7px;height:24px;line-height:24px;color:#999;font-size:16px;font-weight:normal;">条</div>
<svg class="a" style="left:1720.0px;top:1106.5px" width="14" height="17" viewBox="0 0 14 17" fill="none"><polyline points="10.5,1.5 3,8.2 10.5,15" stroke="#a8a8a8" stroke-width="1.6" fill="none"/></svg>
<div class="a" style="left:1751.0px;top:1097.3px;width:37.8px;height:37.2px;background:#edf3fe;border-radius:4px"></div>
<div class="a" style="left:1766.1px;top:1104.3px;height:24px;line-height:24px;color:#2e6ef0;font-size:16px;font-weight:normal;"><span style="letter-spacing:0px;font-size:16.48px;">1</span></div>
<div class="a" style="left:1808.3px;top:1104.3px;height:24px;line-height:24px;color:#222;font-size:16px;font-weight:normal;"><span style="letter-spacing:0px;font-size:16.48px;">2</span></div>
<div class="a" style="left:1851.5px;top:1104.3px;height:24px;line-height:24px;color:#222;font-size:16px;font-weight:normal;"><span style="letter-spacing:0px;font-size:16.48px;">3</span></div>
<svg class="a" style="left:1894.0px;top:1107.0px" width="14" height="17" viewBox="0 0 14 17" fill="none"><polyline points="2.5,1.5 11,8.2 2.5,15" stroke="#777" stroke-width="1.6" fill="none"/></svg>
<div class="a" style="left:1934.2px;top:1097.3px;width:125.2px;height:37.2px;border:1px solid #cdd1d9;border-radius:4px;box-sizing:border-box"></div>
<div class="a" style="left:1945.3px;top:1104.3px;height:24px;line-height:24px;color:#222;font-size:16px;font-weight:normal;"><span style="letter-spacing:2.00px;font-size:16.48px;">20</span>条<span style="letter-spacing:2.00px;font-size:16.48px;">/</span>页</div>
<svg class="a" style="left:2030.0px;top:1111.5px" width="16" height="9" viewBox="0 0 16 9" fill="none"><polyline points="1,1 8.0,8 15,1" stroke="#888" stroke-width="1.5" fill="none"/></svg>
<div class="a" style="left:2076.3px;top:1104.8px;height:24px;line-height:24px;color:#222;font-size:16px;font-weight:normal;">前往</div>
<div class="a" style="left:2119.3px;top:1097.3px;width:53.3px;height:37.0px;border:1px solid #cdd1d9;border-radius:4px;box-sizing:border-box"></div>
<div class="a" style="left:2141.8px;top:1104.3px;height:24px;line-height:24px;color:#222;font-size:16px;font-weight:normal;"><span style="letter-spacing:0px;font-size:16.48px;">1</span></div>
<div class="a" style="left:2184.8px;top:1104.8px;height:24px;line-height:24px;color:#222;font-size:16px;font-weight:normal;">页</div>
<div class="a" style="left:202.0px;top:259.2px;width:171.0px;height:49.4px;background:rgba(0,0,0,0.58);border-radius:4px"></div>
<svg class="a" style="left:194.0px;top:276.0px" width="8" height="16" viewBox="0 0 8 16" fill="none"><polygon points="8,0 0.5,8 8,16" fill="rgba(0,0,0,0.58)"/></svg>
<div class="a" style="left:211.8px;top:268.9px;height:32px;line-height:32px;color:#fff;font-size:24px;font-weight:normal;">点击创建广告</div>
<div class="a" style="left:158.0px;top:269.0px;width:30.0px;height:30.0px;background:#f53838;border-radius:50%"></div>
<svg class="a" style="left:166.0px;top:274.0px" width="14" height="20" viewBox="0 0 14 20" fill="none"><path d="M8.2 1.2 V15.6" stroke="#fff" stroke-width="2.2"/><path d="M8.6 1.4 L3.6 4.6" stroke="#fff" stroke-width="1.8" stroke-linecap="round"/></svg>


</body></html>
